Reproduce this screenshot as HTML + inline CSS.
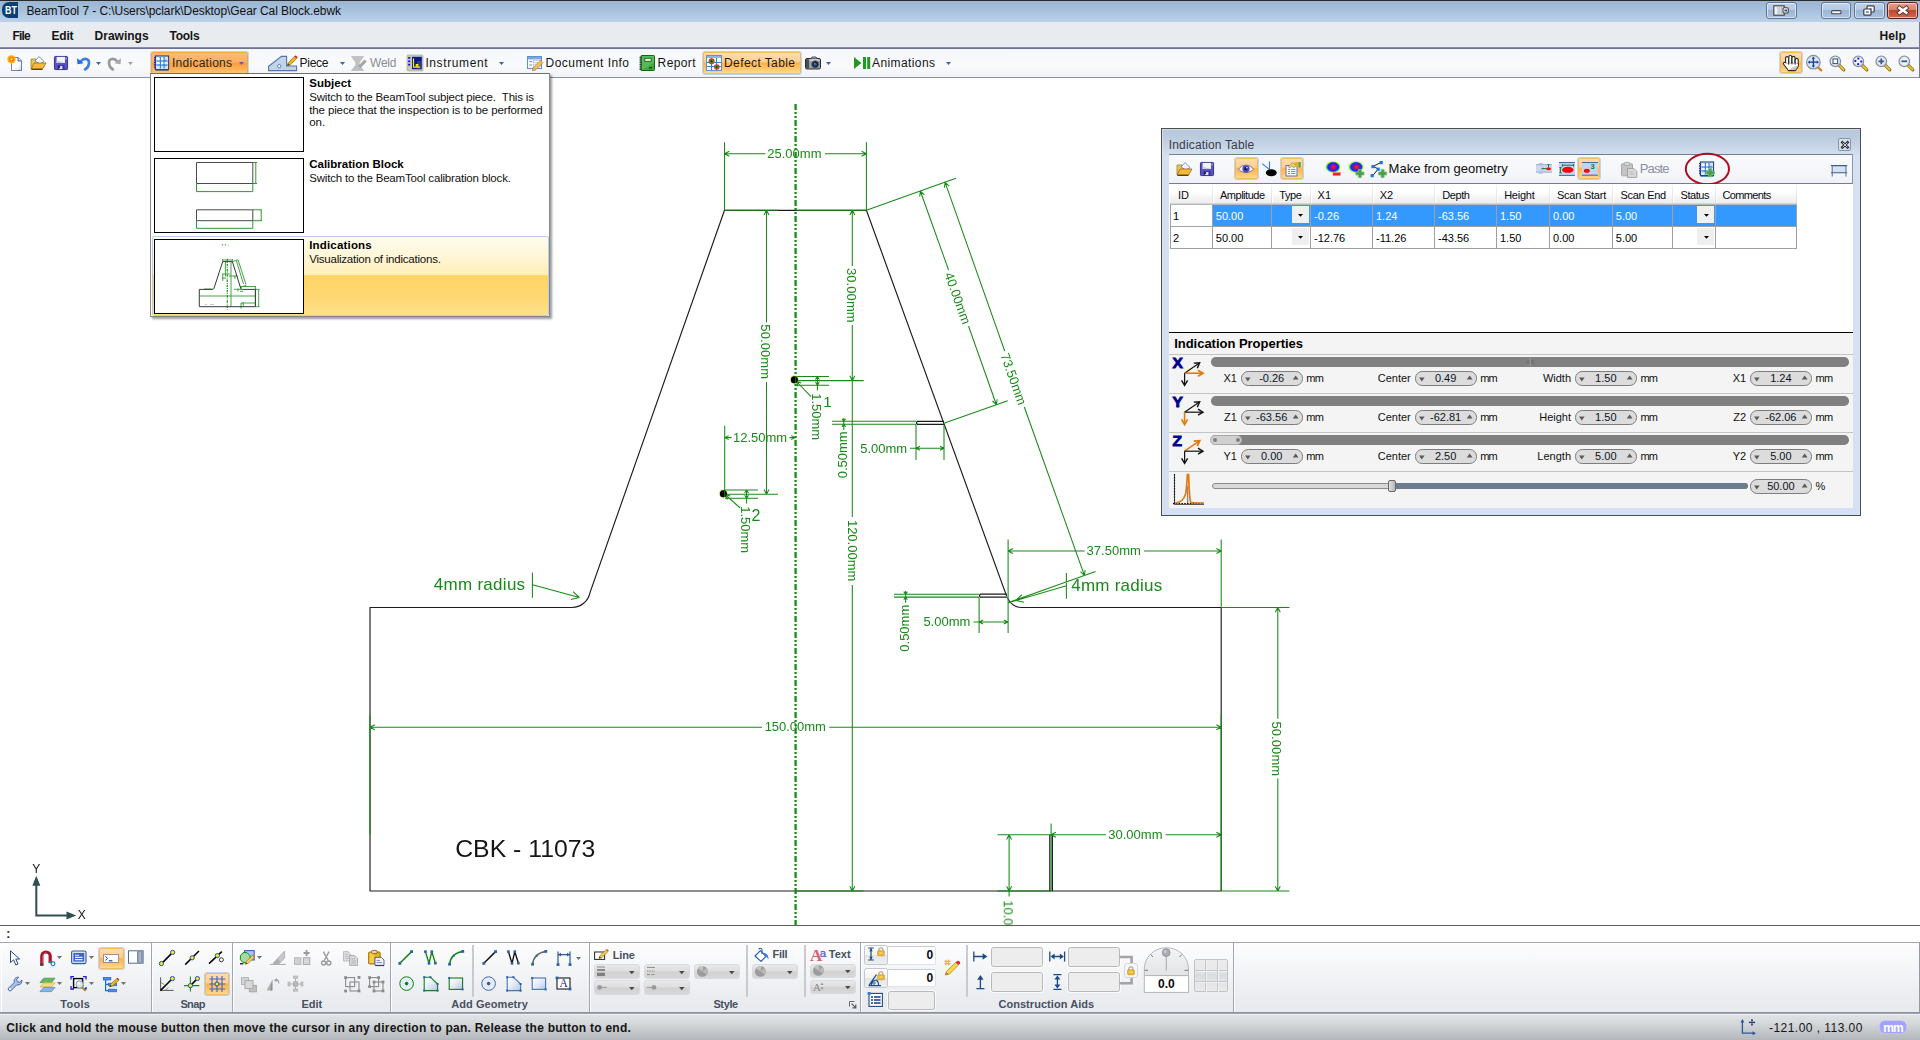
<!DOCTYPE html>
<html lang="en"><head><meta charset="utf-8"><title>BeamTool 7 - Gear Cal Block.ebwk</title>
<style>
html,body{margin:0;padding:0}
body{width:1920px;height:1040px;position:relative;overflow:hidden;background:#fff;font-family:'Liberation Sans',sans-serif;}
.t{position:absolute;white-space:nowrap;line-height:1;display:block}
.i{position:absolute;overflow:visible;display:block}
</style></head>
<body>
<!-- chrome -->
<div style="position:absolute;left:0px;top:0px;width:1920px;height:22px;background:linear-gradient(#99b5d3 0%,#a6c0dc 45%,#bbd2ea 100%);"></div>
<div style="position:absolute;left:0px;top:0px;width:1920px;height:1px;background:#2b2b2b;"></div>
<svg class="i" style="left:2px;top:2px" width="16" height="16" viewBox="0 0 16 16"><path d="M7 0H16V16H7A7 7 0 0 1 0 9V7A7 7 0 0 1 7 0Z" fill="#0d3f73"/><text x="8.9" y="12.4" font-family="Liberation Sans,sans-serif" font-weight="bold" font-size="11.4" fill="#fff" text-anchor="middle" textLength="12" lengthAdjust="spacingAndGlyphs">BT</text></svg>
<span class="t" style="left:26.40px;top:5.00px;font-size:12px;color:#101010;letter-spacing:-0.076px;">BeamTool 7 - C:\Users\pclark\Desktop\Gear Cal Block.ebwk</span>
<div style="position:absolute;left:1766px;top:2px;width:31px;height:17px;box-sizing:border-box;border:1px solid #5f7697;border-radius:3px;background:linear-gradient(#bed2e8 0%,#b4cae3 45%,#9bb6d4 50%,#a9c2de 100%);box-shadow:inset 0 0 0 1px rgba(255,255,255,.55);"></div>
<div style="position:absolute;left:1821px;top:2px;width:30px;height:17px;box-sizing:border-box;border:1px solid #5f7697;border-radius:3px;background:linear-gradient(#bed2e8 0%,#b4cae3 45%,#9bb6d4 50%,#a9c2de 100%);box-shadow:inset 0 0 0 1px rgba(255,255,255,.55);"></div>
<div style="position:absolute;left:1854px;top:2px;width:31px;height:17px;box-sizing:border-box;border:1px solid #5f7697;border-radius:3px;background:linear-gradient(#bed2e8 0%,#b4cae3 45%,#9bb6d4 50%,#a9c2de 100%);box-shadow:inset 0 0 0 1px rgba(255,255,255,.55);"></div>
<div style="position:absolute;left:1887px;top:2px;width:31px;height:17px;box-sizing:border-box;border:1px solid #5a1f1f;border-radius:3px;background:linear-gradient(#e3a193 0%,#d9806c 45%,#c2452c 50%,#cf6a52 100%);box-shadow:inset 0 0 0 1px rgba(255,255,255,.55);"></div>
<svg class="i" style="left:1773px;top:5px" width="16" height="11" viewBox="0 0 16 11"><rect x=".8" y=".8" width="10.4" height="9.4" fill="#eef2f6" stroke="#3c3c46" stroke-width="1.1"/><path d="M5 1.4V9.6M6.8 1.4V9.6M8.6 1.4V9.6" stroke="#a0a8b4" stroke-width=".8"/><rect x="10" y="2.8" width="5.2" height="5.2" rx="1" fill="#fff" stroke="#3c3c46" stroke-width="1.1"/><rect x="11.4" y="4.6" width="2.6" height="1.8" fill="#3c3c46"/></svg>
<svg class="i" style="left:1831.2px;top:10.3px" width="10.6" height="4.4" viewBox="0 0 10.6 4.4"><rect x=".6" y=".6" width="9.4" height="3.2" rx="1" fill="#f4f6f8" stroke="#4a4a52" stroke-width="1.1"/></svg>
<svg class="i" style="left:1863px;top:5px" width="12" height="11" viewBox="0 0 12 11"><rect x="4" y=".8" width="7.2" height="6.2" rx="1" fill="#fff" stroke="#3c3c46" stroke-width="1.2"/><rect x="6.3" y="2.9" width="2.8" height="1.8" fill="#8ea7c4"/><rect x=".8" y="4" width="7.2" height="6.2" rx="1" fill="#fff" stroke="#3c3c46" stroke-width="1.2"/><rect x="2.9" y="6.1" width="3" height="2" fill="#7d98b8"/></svg>
<svg class="i" style="left:1896.6px;top:5.8px" width="11.8" height="8.8" viewBox="0 0 11.8 8.8"><path d="M2.5 2L9.3 6.8M9.3 2L2.5 6.8" stroke="#5a3430" stroke-width="4.4" stroke-linecap="square"/><path d="M2.5 2L9.3 6.8M9.3 2L2.5 6.8" stroke="#fff" stroke-width="2.6" stroke-linecap="square"/></svg>
<div style="position:absolute;left:0px;top:22px;width:1920px;height:25px;background:#e8ebf0;"></div>
<span class="t" style="left:12.40px;top:30.00px;font-size:12px;color:#151515;font-weight:bold;letter-spacing:-0.757px;">File</span>
<span class="t" style="left:51.40px;top:30.00px;font-size:12px;color:#151515;font-weight:bold;letter-spacing:-0.155px;">Edit</span>
<span class="t" style="left:94.60px;top:30.00px;font-size:12px;color:#151515;font-weight:bold;">Drawings</span>
<span class="t" style="left:169.60px;top:30.00px;font-size:12px;color:#151515;font-weight:bold;letter-spacing:-0.277px;">Tools</span>
<span class="t" style="left:1879.40px;top:30.00px;font-size:12px;color:#151515;font-weight:bold;letter-spacing:0.132px;">Help</span>
<div style="position:absolute;left:0px;top:47px;width:1920px;height:1px;background:#878ba3;"></div>
<div style="position:absolute;left:0px;top:48px;width:1920px;height:1px;background:#6f7392;"></div>
<div style="position:absolute;left:0px;top:49px;width:1920px;height:28px;background:linear-gradient(#f6f7fa,#f9fafc 60%,#f1f3f7);"></div>
<div style="position:absolute;left:0px;top:77px;width:1920px;height:1px;background:#8e92a6;"></div>
<div style="position:absolute;left:1919px;top:22px;width:1px;height:56px;background:#727a94;"></div>
<!-- toolbar -->
<svg width="0" height="0" style="position:absolute"><defs><linearGradient id="gPage" x1="0" y1="0" x2="1" y2="1"><stop offset="0" stop-color="#fff"/><stop offset=".6" stop-color="#fff"/><stop offset="1" stop-color="#b8c4dc"/></linearGradient></defs></svg>
<svg class="i" style="left:7px;top:55px" width="16" height="16" viewBox="0 0 16 16"><path d="M4.5 2.5H11L14.5 6V15.5H4.5Z" fill="#fff" stroke="#2c4a78"/><path d="M4.5 2.5H11L14.5 6V15.5H4.5Z" fill="url(#gPage)" stroke="none" opacity=".7"/><path d="M11 2.5V6H14.5" fill="#cfd8e8" stroke="#2c4a78" stroke-width=".8"/><circle cx="4.5" cy="4.3" r="4.1" fill="#ffb000"/><circle cx="4.5" cy="4.3" r="2.6" fill="#ff7a00"/><circle cx="4.5" cy="4.3" r="1.1" fill="#fff2a0"/></svg>
<svg class="i" style="left:30px;top:55px" width="16" height="16" viewBox="0 0 16 16"><path d="M1 4H6L7 5.5H12V14H1Z" fill="#e6c75a" stroke="#a08030" stroke-width=".8"/><path d="M5 6L9 1.5L14 6.5L10 9Z" fill="#f4f8ff" stroke="#5a7ab0" stroke-width=".8"/><path d="M1.2 14L4 8H16L12.5 14Z" fill="#f6b93a" stroke="#9a6a10" stroke-width=".8"/><path d="M1.5 14.3H12.5" stroke="#3a2a08" stroke-width="1"/></svg>
<svg class="i" style="left:54px;top:56px" width="14" height="14" viewBox="0 0 16 16"><rect x=".5" y=".5" width="15" height="15" rx="1" fill="#5a52c8" stroke="#2a2480"/><rect x="3" y="1" width="9.5" height="7" fill="#f2f4fa"/><path d="M3 5L12.5 8H3Z" fill="#c8ccd8"/><rect x="4" y="10.5" width="8" height="5" fill="#3a3490"/><rect x="6" y="11.5" width="3.6" height="3.4" fill="#e8e8f0"/><rect x="5" y="11.5" width="2" height="2" fill="#1a1a30"/><rect x="13.2" y="2" width="1.2" height="2" fill="#c0c0f0"/></svg>
<svg class="i" style="left:76px;top:55px" width="16" height="16" viewBox="0 0 16 16"><g><path d="M4.5 6.5C8 2.5 13.5 3 13 8.5C12.6 11.6 11 13.5 9 14.5" fill="none" stroke="#3f7fe0" stroke-width="2.6" stroke-linecap="round"/><path d="M1 3.2L1.5 9.2L7.6 8.2Z" fill="#2468d8"/></g></svg>
<svg class="i" style="left:95.7px;top:62px" width="5" height="3" viewBox="0 0 5 3"><path d="M0 0H5L2.5 3Z" fill="#4a5aa0"/></svg>
<svg class="i" style="left:106px;top:55px" width="16" height="16" viewBox="0 0 16 16"><g transform="translate(16,0) scale(-1,1)"><path d="M4.5 6.5C8 2.5 13.5 3 13 8.5C12.6 11.6 11 13.5 9 14.5" fill="none" stroke="#9a9a9a" stroke-width="2.6" stroke-linecap="round"/><path d="M1 3.2L1.5 9.2L7.6 8.2Z" fill="#a8a8a8"/></g></svg>
<svg class="i" style="left:128px;top:62px" width="5" height="3" viewBox="0 0 5 3"><path d="M0 0H5L2.5 3Z" fill="#a0a0a0"/></svg>
<div style="position:absolute;left:151px;top:52px;width:96.5px;height:21.5px;box-sizing:border-box;border:1px solid #f3a848;border-radius:2px;background:linear-gradient(#ffba78 0%,#ffae60 45%,#ff9c3a 52%,#ffb25a 80%,#ffc272 100%);box-shadow:0 0 0 1px #9cc0ee99;"></div>
<svg class="i" style="left:152.6px;top:54.6px" width="16" height="16" viewBox="0 0 16 16"><rect x="2.5" y="1" width="13" height="13.5" fill="#f4f8ff" stroke="#274a86" stroke-width="1.2"/><rect x="3.6" y="2.2" width="10.8" height="11" fill="#cfe0f6"/><path d="M3.5 6H14.5M3.5 10H14.5M7.3 2V13.5M11 2V13.5" stroke="#2f80d8" stroke-width="1.3"/><rect x="4.2" y="3" width="2.4" height="2.3" fill="#fff"/><rect x="8" y="3" width="2.3" height="2.3" fill="#fff"/><rect x="4.2" y="6.8" width="2.4" height="2.4" fill="#fff"/><rect x="8" y="6.8" width="2.3" height="2.4" fill="#fff"/><rect x="11.7" y="6.8" width="2.3" height="2.4" fill="#e8eefa"/><rect x="4.2" y="10.8" width="2.4" height="2.2" fill="#e0e6f2"/><rect x="8" y="10.8" width="2.3" height="2.2" fill="#d8deee"/><path d="M2.5 15H15.5" stroke="#274a86" stroke-width="1.2"/><path d="M1 2.5H3M1 4.2H3M1 5.9H3M1 7.6H3M1 9.3H3M1 11H3M1 12.7H3" stroke="#1a30a8" stroke-width="1"/></svg>
<span class="t" style="left:172.00px;top:57.00px;font-size:12px;color:#1c2a20;letter-spacing:0.263px;">Indications</span>
<svg class="i" style="left:239px;top:62px" width="5" height="3" viewBox="0 0 5 3"><path d="M0 0H5L2.5 3Z" fill="#5a62a8"/></svg>
<svg class="i" style="left:268px;top:54.6px" width="30" height="16" viewBox="0 0 30 16"><path d="M.6 15.6V11.2L13.4 1.4H18.6V11H28.6V15.6Z" fill="#c3d3ea" stroke="#4e76ad" stroke-width="1.1"/><circle cx="11.2" cy="11.2" r="1.7" fill="#fff" stroke="#4e76ad" stroke-width=".9"/><path d="M19.4 10.6L20.2 8L26.4 1.4L28.6 3.4L22.2 10Z" fill="#e8b820" stroke="#7a5a10" stroke-width=".6"/><path d="M26.4 1.4L27.6 .2L29.6 2.2L28.6 3.4Z" fill="#e02020"/><path d="M19.4 10.6L20 8.6L21.6 10Z" fill="#3a2a10"/></svg>
<span class="t" style="left:299.50px;top:57.00px;font-size:12px;color:#151515;letter-spacing:-0.254px;">Piece</span>
<svg class="i" style="left:340px;top:62px" width="5" height="3" viewBox="0 0 5 3"><path d="M0 0H5L2.5 3Z" fill="#4a5aa0"/></svg>
<svg class="i" style="left:351px;top:55px" width="16" height="16" viewBox="0 0 16 16"><path d="M.5 1.5H12.5L8.2 7.5V10L12.5 15.5H.5L4.8 10V7.5Z" fill="#c2c2c2" stroke="#b0b0b0" stroke-width=".6"/><path d="M7 13L7.6 11L13.5 5L15.3 6.6L9.2 12.8Z" fill="#a8a8a8" stroke="#8a8a8a" stroke-width=".6"/><path d="M7 13L7.5 11.4L8.8 12.7Z" fill="#e8e8e8"/></svg>
<span class="t" style="left:370.00px;top:57.00px;font-size:12px;color:#8c8c94;letter-spacing:-0.208px;">Weld</span>
<svg class="i" style="left:407px;top:55px" width="16" height="16" viewBox="0 0 16 16"><rect x="0" y="0" width="16" height="16" rx="1" fill="#c9c8bf" stroke="#a4a39a" stroke-width=".6"/><rect x="5" y="1.8" width="9.8" height="12.4" fill="#0c1a80"/><rect x="10" y="6" width="4.8" height="8.2" fill="#3a4a98" opacity=".7"/><path d="M6.5 3.5V12.2H13M9.3 12V9.5H10.8V12" fill="none" stroke="#fff000" stroke-width="1.2"/><rect x="1.2" y="2" width="2" height="1.8" fill="#1010f0"/><rect x="1.2" y="5.4" width="2" height="1.8" fill="#1010f0"/><rect x="1.2" y="8.8" width="2" height="1.8" fill="#1010f0"/></svg>
<span class="t" style="left:425.40px;top:57.00px;font-size:12px;color:#151515;letter-spacing:0.612px;">Instrument</span>
<svg class="i" style="left:499px;top:62px" width="5" height="3" viewBox="0 0 5 3"><path d="M0 0H5L2.5 3Z" fill="#4a5aa0"/></svg>
<svg class="i" style="left:527px;top:55px" width="16" height="16" viewBox="0 0 16 16"><rect x=".5" y="1.5" width="14" height="12" fill="#f4f7fc" stroke="#5f8fd0"/><rect x="1" y="2" width="13" height="2.4" fill="#7aa6e0"/><path d="M2.5 6.5H5M2.5 10H5" stroke="#5f8fd0" stroke-width="1.2"/><rect x="6.5" y="5.5" width="7" height="2.2" fill="#fff" stroke="#b0b8c8" stroke-width=".6"/><rect x="6.5" y="9.2" width="7" height="2.2" fill="#fff" stroke="#b0b8c8" stroke-width=".6"/><path d="M5.5 15.5L6.3 12.4L13.5 5.2L16 7.6L8.8 14.8Z" fill="#f0c050" stroke="#b07820" stroke-width=".6"/><path d="M5.5 15.5L6.3 12.6L8.6 14.8Z" fill="#f6e0c0" stroke="#8a5a20" stroke-width=".5"/></svg>
<span class="t" style="left:545.60px;top:57.00px;font-size:12px;color:#151515;letter-spacing:0.447px;">Document Info</span>
<svg class="i" style="left:639px;top:55px" width="16" height="16" viewBox="0 0 16 16"><rect x="2" y=".5" width="13.5" height="15" rx=".8" fill="#3fa83f" stroke="#0f6a0f"/><path d="M3 1H15V8L3 15Z" fill="#6cc86c" opacity=".55"/><rect x="5.8" y="3.3" width="6.4" height="3" fill="#e8f8e8" stroke="#0f5a0f" stroke-width=".8"/><path d="M10 12.8H13" stroke="#083808" stroke-width="1.3"/><path d="M.5 2.2H2.6M.5 4H2.6M.5 5.8H2.6M.5 7.6H2.6M.5 9.4H2.6M.5 11.2H2.6M.5 13H2.6M.5 14.6H2.6" stroke="#222" stroke-width=".9"/></svg>
<span class="t" style="left:657.60px;top:57.00px;font-size:12px;color:#151515;letter-spacing:0.396px;">Report</span>
<div style="position:absolute;left:703.2px;top:52px;width:98.3px;height:21.5px;box-sizing:border-box;border:1px solid #f1bc60;border-radius:2px;background:linear-gradient(#ffdcae 0%,#ffcf90 42%,#ffb44a 52%,#ffc468 76%,#ffdb8a 100%);box-shadow:0 0 0 1px #9fbdea99;"></div>
<svg class="i" style="left:706px;top:55.2px" width="16" height="16" viewBox="0 0 16 16"><rect x=".5" y=".5" width="15" height="15" fill="#fff" stroke="#5f8fd0"/><rect x="1" y="1" width="14" height="2" fill="#8fb4e8"/><path d="M1 7.5H15M1 11.5H15M5.5 3V15M10.5 3V15" stroke="#2f7fe0" stroke-width="1.1"/><circle cx="5.6" cy="6.3" r="3" fill="#f02a1a"/><circle cx="5.6" cy="6.3" r="1.9" fill="#18b018"/><circle cx="5.6" cy="6.3" r=".9" fill="#101010"/><circle cx="10.8" cy="12" r="2.8" fill="#f02a1a"/><circle cx="10.8" cy="12" r="1.8" fill="#18b018"/><circle cx="10.8" cy="12" r=".8" fill="#101010"/></svg>
<span class="t" style="left:724.00px;top:57.00px;font-size:12px;color:#1c1c1c;letter-spacing:0.410px;">Defect Table</span>
<svg class="i" style="left:805.3px;top:56.2px" width="16" height="14" viewBox="0 0 16 14"><rect x=".5" y="2.5" width="15" height="10.5" rx="1.5" fill="#9aa0aa" stroke="#2a2a2a"/><rect x="1" y="3" width="3" height="9.5" rx="1" fill="#4a4e58"/><path d="M6 2.5L7 1H11L12 2.5" fill="#b8bcc4" stroke="#2a2a2a" stroke-width=".8"/><rect x="4.5" y="3.2" width="10" height="1.6" fill="#d0d4dc"/><circle cx="10.2" cy="8.3" r="3.6" fill="#20242c" stroke="#6a6e78" stroke-width=".8"/><circle cx="10.2" cy="8.3" r="1.5" fill="#1a5ad8"/><circle cx="9.7" cy="7.8" r=".5" fill="#9cc0ff"/></svg>
<svg class="i" style="left:826px;top:62px" width="5" height="3" viewBox="0 0 5 3"><path d="M0 0H5L2.5 3Z" fill="#4a5aa0"/></svg>
<svg class="i" style="left:854px;top:57px" width="16.2" height="12" viewBox="0 0 16.2 12"><path d="M0 0L7.4 6L0 12Z" fill="#1e9a1e"/><rect x="9" y="0" width="3" height="12" fill="#1e9a1e"/><rect x="13.2" y="0" width="3" height="12" fill="#1e9a1e"/></svg>
<span class="t" style="left:872.00px;top:57.00px;font-size:12px;color:#151515;letter-spacing:0.404px;">Animations</span>
<svg class="i" style="left:946px;top:62px" width="5" height="3" viewBox="0 0 5 3"><path d="M0 0H5L2.5 3Z" fill="#4a5aa0"/></svg>
<div style="position:absolute;left:1779.5px;top:52.4px;width:22px;height:21px;box-sizing:border-box;border:1px solid #f1bc60;border-radius:2px;background:linear-gradient(#ffdcae 0%,#ffcf90 42%,#ffb44a 52%,#ffc468 76%,#ffdb8a 100%);box-shadow:0 0 0 1px #9fbdea99;"></div>
<svg class="i" style="left:1783px;top:55px" width="16" height="16" viewBox="0 0 16 16"><g stroke="#2a2a2a" stroke-width="1.1" fill="#fff" stroke-linejoin="round"><rect x="2.6" y="1.6" width="3" height="9" rx="1.5"/><rect x="5.8" y=".5" width="3" height="10" rx="1.5"/><rect x="9" y="1.4" width="3" height="9" rx="1.5"/><rect x="12.2" y="3.4" width="3" height="8" rx="1.5"/><path d="M3 8.6H15.2V10.4C15.2 12.6 13 14 12.4 15.6H5.4C4.4 13.4 1.6 11 .6 9C0 7.6 1.6 6.8 2.6 7.8Z"/></g><path d="M3.1 8.2H14.7V10.4C14.7 12.4 12.6 13.8 12 15.1H5.8C4.8 13 2.4 11 1.2 8.8C1 8 2 7.6 2.6 8.4Z" fill="#fff"/><path d="M5.8 15.1L12 15.1C12.6 13.8 14.7 12.4 14.7 10.4L9 12.6Z" fill="#b4b4b4" opacity=".75"/><path d="M5.7 7V9.6M8.9 7V9.4M12.1 7.4V9.6" stroke="#2a2a2a" stroke-width="1"/></svg>
<svg class="i" style="left:1806.2px;top:55px" width="16" height="16" viewBox="0 0 16 16"><path d="M11 11.4L15.2 15.4" stroke="#d88018" stroke-width="2.2" stroke-linecap="round"/><circle cx="7.4" cy="7.2" r="6.8" fill="#d4e4f8" stroke="#8a9098" stroke-width="1.2"/><g transform="translate(.9 .4)"><path d="M6.5 2.2V11.4M1.9 6.8H11.1" stroke="#1c3c88" stroke-width="1.3"/><path d="M6.5 1.2L4.9 3.4H8.1ZM6.5 12.4L4.9 10.2H8.1ZM.9 6.8L3.1 5.2V8.4ZM12.1 6.8L9.9 5.2V8.4Z" fill="#1c3c88"/></g></svg>
<svg class="i" style="left:1829px;top:55px" width="16" height="16" viewBox="0 0 16 16"><path d="M9.5 9.5L14.8 14.8" stroke="#8a6a10" stroke-width="3.2" stroke-linecap="round"/><path d="M9.8 9.8L14.6 14.6" stroke="#e8c840" stroke-width="1.8" stroke-linecap="round"/><circle cx="6.3" cy="6.3" r="5.2" fill="#eef3fa" stroke="#8a9098" stroke-width="1.4"/><circle cx="6.3" cy="6.3" r="4.2" fill="none" stroke="#d4dae4" stroke-width=".8"/><rect x="4" y="4" width="4.6" height="4.6" fill="#fff" stroke="#3a5a90" stroke-width="1.1"/></svg>
<svg class="i" style="left:1852px;top:55px" width="16" height="16" viewBox="0 0 16 16"><path d="M9.5 9.5L14.8 14.8" stroke="#8a6a10" stroke-width="3.2" stroke-linecap="round"/><path d="M9.8 9.8L14.6 14.6" stroke="#e8c840" stroke-width="1.8" stroke-linecap="round"/><circle cx="6.3" cy="6.3" r="5.2" fill="#eef3fa" stroke="#8a9098" stroke-width="1.4"/><circle cx="6.3" cy="6.3" r="4.2" fill="none" stroke="#d4dae4" stroke-width=".8"/><rect x="5.4" y="2.6" width="1.9" height="1.9" fill="#1010f0"/><rect x="2.4" y="5" width="1.9" height="1.9" fill="#1010f0"/><rect x="8.3" y="5.6" width="1.9" height="1.9" fill="#1010f0"/><rect x="5.2" y="8.2" width="1.9" height="1.9" fill="#1010f0"/></svg>
<svg class="i" style="left:1875px;top:55px" width="16" height="16" viewBox="0 0 16 16"><path d="M9.5 9.5L14.8 14.8" stroke="#8a6a10" stroke-width="3.2" stroke-linecap="round"/><path d="M9.8 9.8L14.6 14.6" stroke="#e8c840" stroke-width="1.8" stroke-linecap="round"/><circle cx="6.3" cy="6.3" r="5.2" fill="#eef3fa" stroke="#8a9098" stroke-width="1.4"/><circle cx="6.3" cy="6.3" r="4.2" fill="none" stroke="#d4dae4" stroke-width=".8"/><path d="M6.3 3.4V9.2M3.4 6.3H9.2" stroke="#3a5a90" stroke-width="1.8"/></svg>
<svg class="i" style="left:1898px;top:55px" width="16" height="16" viewBox="0 0 16 16"><path d="M9.5 9.5L14.8 14.8" stroke="#8a6a10" stroke-width="3.2" stroke-linecap="round"/><path d="M9.8 9.8L14.6 14.6" stroke="#e8c840" stroke-width="1.8" stroke-linecap="round"/><circle cx="6.3" cy="6.3" r="5.2" fill="#eef3fa" stroke="#8a9098" stroke-width="1.4"/><circle cx="6.3" cy="6.3" r="4.2" fill="none" stroke="#d4dae4" stroke-width=".8"/><path d="M3.4 6.3H9.2" stroke="#3a5a90" stroke-width="1.8"/></svg>
<!-- drawing -->
<svg class="i" style="left:0;top:78px;will-change:transform" width="1920" height="847" viewBox="0 78 1920 847" font-family="Liberation Sans, sans-serif">
<path d="M724.5 210.3H866.4L1006.6 596M1007.4 597.6A15.5 15.5 0 0 0 1022.5 607.5H1221.2V891H370V607.5H572A18.4 18.4 0 0 0 590 592.6L724.5 210.3" fill="none" stroke="#1c1c1c" stroke-width="1.15" stroke-linejoin="round"/>
<path d="M944 421.3H917.5Q915.5 422.8 917.5 424.3H944.8M1006.6 594.1H980.5Q978.5 595.6 980.5 597.2H1007.4M1049.8 891V834.7M1052.4 891V834.7" fill="none" stroke="#1c1c1c" stroke-width="1.2"/>
<path d="M795.6 104V925" stroke="#178a17" stroke-width="2.3" stroke-dasharray="6 2 2 2 2 2" fill="none"/>
<path d="M724.5 142.3L724.5 210.3M866.4 142.3L866.4 210.3M724.5 153.8L765.3 153.8M825.0 153.8L866.4 153.8M724.5 153.8L729.3 156.3M724.5 153.8L729.3 151.3M866.4 153.8L861.6 151.3M866.4 153.8L861.6 156.3M724.5 210.3L778.0 210.3M795.6 210.3L866.4 210.3M866.4 210.3L955.9 178.2M944.6 423.0L1007.7 400.8M920.4 191.2L948.6 270.1M968.5 326.0L996.4 404.7M920.4 191.2L919.7 196.6M920.4 191.2L924.3 194.9M996.4 404.7L997.1 399.3M996.4 404.7L992.5 401.0M945.1 182.4L1004.7 351.0M1024.3 407.0L1084.4 575.4M945.1 182.4L944.4 187.8M945.1 182.4L949.0 186.1M1084.4 575.4L1085.1 570.0M1084.4 575.4L1080.5 571.7M1008.5 602.5L1095.6 571.5M766.5 210.3L766.5 322.6M766.5 382.0L766.5 494.2M766.5 210.3L764.0 215.1M766.5 210.3L769.0 215.1M766.5 494.2L769.0 489.4M766.5 494.2L764.0 489.4M725.0 494.2L778.0 494.2M852.3 210.3L852.3 266.0M852.3 325.0L852.3 380.6M852.3 210.3L849.8 215.1M852.3 210.3L854.8 215.1M852.3 380.6L854.8 375.8M852.3 380.6L849.8 375.8M796.0 380.6L863.7 380.6M852.3 380.6L852.3 517.0M852.3 585.0L852.3 891.0M852.3 891.0L854.8 886.2M852.3 891.0L849.8 886.2M796.0 891.0L863.5 891.0M796.0 376.4L829.0 376.4M796.0 385.2L829.0 385.2M817.4 376.4L817.4 390.5M817.4 376.4L815.5 379.5M817.4 376.4L819.3 379.5M817.4 385.2L819.3 382.1M817.4 385.2L815.5 382.1M796.5 381.5L811.0 396.6M796.5 381.5L798.0 386.3M796.5 381.5L801.2 383.1M725.0 490.0L758.0 490.0M725.0 498.3L758.0 498.3M746.6 490.0L746.6 503.4M746.6 490.0L744.7 493.1M746.6 490.0L748.5 493.1M746.6 498.3L748.5 495.2M746.6 498.3L744.7 495.2M725.5 494.8L740.2 508.0M725.5 494.8L727.3 499.5M725.5 494.8L730.3 496.1M724.7 425.7L724.7 493.0M724.7 437.6L731.5 437.6M789.5 437.6L795.6 437.6M724.7 437.6L728.7 439.6M724.7 437.6L728.7 435.6M795.2 437.6L791.2 435.6M795.2 437.6L791.2 439.6M832.0 421.3L916.5 421.3M832.0 424.3L916.5 424.3M843.8 418.0L843.8 430.0M843.8 421.3L845.6 418.7M843.8 421.3L842.0 418.7M843.8 424.3L842.0 426.9M843.8 424.3L845.6 426.9M916.0 424.3L916.0 460.0M944.0 424.3L944.0 460.0M910.0 448.3L944.0 448.3M916.0 448.3L920.0 450.3M916.0 448.3L920.0 446.3M944.0 448.3L940.0 446.3M944.0 448.3L940.0 450.3M894.0 594.2L979.0 594.2M894.0 597.1L979.0 597.1M905.6 591.0L905.6 602.8M905.6 594.2L907.4 591.6M905.6 594.2L903.8 591.6M905.6 597.1L903.8 599.7M905.6 597.1L907.4 599.7M979.1 597.5L979.1 633.0M973.5 622.0L1008.0 622.0M979.1 622.0L983.1 624.0M979.1 622.0L983.1 620.0M1007.8 622.0L1003.8 620.0M1007.8 622.0L1003.8 624.0M1008.1 539.6L1008.1 633.0M1221.2 539.4L1221.2 607.5M1008.1 551.0L1084.6 551.0M1144.0 551.0L1221.2 551.0M1008.1 551.0L1012.9 553.5M1008.1 551.0L1012.9 548.5M1221.2 551.0L1216.4 548.5M1221.2 551.0L1216.4 553.5M532.4 572.4L532.4 597.8M532.4 584.7L579.3 597.5M579.3 597.5L573.1 591.7M579.3 597.5L571.0 599.4M1066.4 573.1L1066.4 598.8M1066.4 585.8L1010.0 602.3M1015.8 600.5L1024.1 602.2M1015.8 600.5L1021.9 594.6M370.0 727.2L762.0 727.2M829.3 727.2L1221.2 727.2M370.0 727.2L374.8 729.7M370.0 727.2L374.8 724.7M1221.2 727.2L1216.4 724.7M1221.2 727.2L1216.4 729.7M370.0 715.3L370.0 834.3M1221.2 715.0L1221.2 891.0M1221.2 607.5L1289.4 607.5M1221.2 891.0L1289.4 891.0M1277.8 607.5L1277.8 718.8M1277.8 778.4L1277.8 891.0M1277.8 607.5L1275.3 612.3M1277.8 607.5L1280.3 612.3M1277.8 891.0L1280.3 886.2M1277.8 891.0L1275.3 886.2M1051.1 823.4L1051.1 891.0M1051.1 834.7L1106.0 834.7M1165.7 834.7L1221.2 834.7M1051.1 834.7L1055.9 837.2M1051.1 834.7L1055.9 832.2M1221.2 834.7L1216.4 832.2M1221.2 834.7L1216.4 837.2M997.5 834.7L1051.1 834.7M997.5 891.0L1051.1 891.0M1009.1 834.7L1009.1 896.6M1009.1 834.7L1006.6 839.5M1009.1 834.7L1011.6 839.5M1009.1 891.0L1011.6 886.2M1009.1 891.0L1006.6 886.2" fill="none" stroke="#178a17" stroke-width="1.05"/>
<text x="767.3" y="157.6" font-size="13" fill="#178a17">25.00mm</text>
<text transform="translate(944.3 274.2) rotate(70.35)" font-size="13" fill="#178a17">40.00mm</text>
<text transform="translate(1000.2 355.0) rotate(70.35)" font-size="13" fill="#178a17">73.50mm</text>
<text transform="translate(761.0 324.3) rotate(90)" font-size="13" fill="#178a17" letter-spacing="0.1">50.00mm</text>
<text transform="translate(846.9 267.9) rotate(90)" font-size="13" fill="#178a17" letter-spacing="0.1">30.00mm</text>
<text transform="translate(847.6 519.9) rotate(90)" font-size="13" fill="#178a17">120.00mm</text>
<text transform="translate(811.6 393.2) rotate(90)" font-size="13" fill="#178a17">1.50mm</text>
<text x="823.3" y="407.0" font-size="15.2" fill="#178a17">1</text>
<text transform="translate(740.6 506.2) rotate(90)" font-size="13" fill="#178a17">1.50mm</text>
<text x="751.5" y="520.6" font-size="16" fill="#178a17">2</text>
<text x="733.1" y="441.9" font-size="13" fill="#178a17" letter-spacing="-0.03">12.50mm</text>
<text transform="translate(846.8 478.3) rotate(-90)" font-size="13" fill="#178a17">0.50mm</text>
<text x="860.2" y="452.7" font-size="13" fill="#178a17">5.00mm</text>
<text transform="translate(909.3 651.7) rotate(-90)" font-size="13" fill="#178a17">0.50mm</text>
<text x="923.4" y="626.4" font-size="13" fill="#178a17">5.00mm</text>
<text x="1086.6" y="554.9" font-size="13" fill="#178a17">37.50mm</text>
<text x="433.8" y="590.4" font-size="17" fill="#178a17" letter-spacing="0.28">4mm radius</text>
<text x="1071.2" y="591.0" font-size="17" fill="#178a17" letter-spacing="0.25">4mm radius</text>
<text x="764.7" y="731.1" font-size="13" fill="#178a17" letter-spacing="-0.05">150.00mm</text>
<text transform="translate(1272.4 721.4) rotate(90)" font-size="13" fill="#178a17" letter-spacing="0.1">50.00mm</text>
<text x="1108.3" y="838.5" font-size="13" fill="#178a17">30.00mm</text>
<text transform="translate(1003.7 900.3) rotate(90)" font-size="13" fill="#178a17">10.00mm</text>
<circle cx="794.4" cy="379.7" r="4.1" fill="#b8c020" opacity=".8"/><circle cx="794.4" cy="379.7" r="3.5" fill="#000"/>
<path d="M795.6 376.5V383.09999999999997" stroke="#0a6a0a" stroke-width="1.2"/>
<circle cx="723.4" cy="493.7" r="4.1" fill="#b8c020" opacity=".8"/><circle cx="723.4" cy="493.7" r="3.5" fill="#000"/>
<path d="M724.6 490.5V497.09999999999997" stroke="#0a6a0a" stroke-width="1.2"/>
<text x="455.2" y="856.6" font-size="24.8" fill="#161616">CBK - 11073</text>
<g fill="#2f4f4f" stroke="none"><path d="M35.3 884V916.5H68V914.5H37.3V884Z"/><path d="M36.3 875.8L32.3 885.8H40.3Z"/><path d="M76.2 915.5L66.5 911.6V919.4Z"/></g>
<text x="32.3" y="873.2" font-size="12" fill="#111">Y</text><text x="77.8" y="919.4" font-size="12" fill="#111">X</text>
</svg>
<!-- dropdown -->
<div style="position:absolute;left:153px;top:76px;width:398px;height:242px;background:rgba(0,0,0,.35);box-shadow:0 0 2px 1px rgba(0,0,0,.4);"></div>
<div style="position:absolute;left:150px;top:73px;width:400px;height:244px;box-sizing:border-box;background:#fff;border:1px solid #868686;border-top-color:#6e6e6e;"></div>
<div style="position:absolute;left:151.5px;top:236px;width:397px;height:80.4px;box-sizing:border-box;border:1px solid #b7cdee;border-radius:2px;background:linear-gradient(#fffcef 0%,#fff6d6 25%,#ffefb8 48.5%,#ffd465 49.5%,#ffd772 75%,#ffe08c 100%);"></div>
<div style="position:absolute;left:154px;top:77px;width:150px;height:74.6px;box-sizing:border-box;border:1px solid #000;background:#fff;"></div>
<div style="position:absolute;left:154px;top:158px;width:150px;height:74.6px;box-sizing:border-box;border:1px solid #000;background:#fff;"></div>
<div style="position:absolute;left:154px;top:239px;width:150px;height:74.6px;box-sizing:border-box;border:1px solid #000;background:#fff;"></div>
<svg class="i" style="left:154px;top:158px" width="150" height="75" viewBox="154 158 150 75"><path d="M196.5 183.5V191.6H252.8V183.5M255.8 162.5V183.5M252.8 162.5H257M252.8 183.5H257M196.5 220.7V228.3H252.8V220.7M252.8 209.8H262M252.8 220.7H262M261.2 209.8V220.7" fill="none" stroke="#2f9a2f" stroke-width="1"/><path d="M196.5 162.5H252.8V183.5H196.5ZM196.5 209.8H252.8V220.7H196.5Z" fill="none" stroke="#4a4a4a" stroke-width="1"/></svg>
<svg class="i" style="left:154px;top:239px" width="150" height="75" viewBox="154 239 150 75"><g fill="none" stroke="#2f9a2f" stroke-width=".9"><path d="M227.3 258.7V309.6" stroke-width="1.3" stroke-dasharray="2.4 1 .8 1"/><path d="M222.7 259V261.6M232.4 259V261.6M222.7 260H232.4M232.4 261.6L238 259.8M236.3 260.5L243.5 284M238 259.8L246 284.5M240.5 287.3L246 285.3M225.4 261.6V276.5M231 261.6V306.7M221.8 274H230M221.8 278H226M222.8 274V281M229 276H237.5M235 275.5V279M199.3 296H255.4M241 286V289.4M241 286.5H255.4M255.4 286V306.7M255.4 289.4H259.5M255.4 306.7H259.5M258.7 289.4V306.7M234 289.3H241M238 288.5V291.5M240 291.3H243M243.2 303H255.4M243.2 302V306.7M241 303V308.5M241 303H243.2M204 289H212.5"/><path d="M222 244.2L223 245.4M225 244.2L226 245.4M228.3 245.5V246" stroke-width="1.1" opacity=".8"/></g><path d="M222.7 261.6H232.4L240.8 288.6Q241.3 289.4 242.3 289.4H255.4V306.7H199.3V289.4H212.6Q213.5 289.4 213.9 288.6Z" fill="none" stroke="#3a3a3a" stroke-width="1"/><path d="M205 304.5H207M210 304.5H214" stroke="#aaa" stroke-width=".7"/></svg>
<span class="t" style="left:309.20px;top:78.00px;font-size:11.5px;color:#000;font-weight:bold;letter-spacing:0.044px;">Subject</span>
<span class="t" style="left:309.20px;top:92.00px;font-size:11.5px;color:#111;letter-spacing:-0.191px;">Switch to the BeamTool subject piece. &nbsp;This is</span>
<span class="t" style="left:309.20px;top:105.00px;font-size:11.5px;color:#111;letter-spacing:-0.119px;">the piece that the inspection is to be performed</span>
<span class="t" style="left:309.20px;top:117.00px;font-size:11.5px;color:#111;">on.</span>
<span class="t" style="left:309.20px;top:159.00px;font-size:11.5px;color:#000;font-weight:bold;">Calibration Block</span>
<span class="t" style="left:309.20px;top:173.00px;font-size:11.5px;color:#111;letter-spacing:-0.183px;">Switch to the BeamTool calibration block.</span>
<span class="t" style="left:309.20px;top:240.00px;font-size:11.5px;color:#000;font-weight:bold;letter-spacing:0.180px;">Indications</span>
<span class="t" style="left:309.20px;top:254.00px;font-size:11.5px;color:#111;letter-spacing:-0.220px;">Visualization of indications.</span>
<!-- panel -->
<div style="position:absolute;left:1161px;top:128px;width:700px;height:388px;box-sizing:border-box;border:1px solid #4e4e4e;background:#d5e1f2;"></div>
<div style="position:absolute;left:1162px;top:129px;width:698px;height:25.5px;background:linear-gradient(#b6c7da 0%,#bccde0 35%,#d3dfee 100%);box-shadow:inset 1px 1px 0 rgba(255,255,255,.35);"></div>
<span class="t" style="left:1168.80px;top:139.00px;font-size:12px;color:#3a3a46;letter-spacing:0.148px;">Indication Table</span>
<div style="position:absolute;left:1838.3px;top:138.4px;width:12.4px;height:12.3px;box-sizing:border-box;border:1px solid #8495ad;border-radius:2px;background:#d6e1ef;"></div>
<svg class="i" style="left:1840.6px;top:141px" width="8" height="8" viewBox="0 0 8 8"><path d="M1.4 1.4L6.6 6.4M6.6 1.4L1.4 6.4" stroke="#2a2a2a" stroke-width="2.6" stroke-linecap="square"/><path d="M1.6 1.6L6.4 6.2M6.4 1.6L1.6 6.2" stroke="#f4f4f4" stroke-width=".9"/></svg>
<div style="position:absolute;left:1169px;top:154px;width:684px;height:30px;box-sizing:border-box;background:linear-gradient(#f8f9fb,#f5f6fa 70%,#eff1f6);border-top:1px solid #6f8199;border-bottom:1px solid #777a93;border-right:1px solid #8f97ad;box-shadow:0 1px 0 #b4b6c6;"></div>
<svg class="i" style="left:1175.8px;top:161px" width="16" height="15" viewBox="0 0 16 15"><path d="M1 4H6L7 5.5H12V14H1Z" fill="#e6c75a" stroke="#a08030" stroke-width=".8"/><path d="M5 6L9 1.5L14 6.5L10 9Z" fill="#f4f8ff" stroke="#5a7ab0" stroke-width=".8"/><path d="M1.2 14L4 8H16L12.5 14Z" fill="#f6b93a" stroke="#9a6a10" stroke-width=".8"/><path d="M1.5 14.3H12.5" stroke="#3a2a08" stroke-width="1"/></svg>
<svg class="i" style="left:1200px;top:162px" width="14" height="14" viewBox="0 0 16 16"><rect x=".5" y=".5" width="15" height="15" rx="1" fill="#5a52c8" stroke="#2a2480"/><rect x="3" y="1" width="9.5" height="7" fill="#f2f4fa"/><path d="M3 5L12.5 8H3Z" fill="#c8ccd8"/><rect x="4" y="10.5" width="8" height="5" fill="#3a3490"/><rect x="6" y="11.5" width="3.6" height="3.4" fill="#e8e8f0"/><rect x="5" y="11.5" width="2" height="2" fill="#1a1a30"/><rect x="13.2" y="2" width="1.2" height="2" fill="#c0c0f0"/></svg>
<div style="position:absolute;left:1235.4px;top:158.3px;width:22.2px;height:21px;box-sizing:border-box;border:1px solid #f1bc60;border-radius:2px;background:linear-gradient(#ffdcae 0%,#ffcf90 42%,#ffb44a 52%,#ffc468 76%,#ffdb8a 100%);box-shadow:0 0 0 1px #9fbdea99;"></div>
<svg class="i" style="left:1238px;top:163px" width="16" height="12" viewBox="0 0 16 12"><path d="M.5 6.2C4 .8 12 .8 15.5 6.2C12 10.6 4 10.6 .5 6.2Z" fill="#f2f2fa" stroke="#5a5a9a" stroke-width=".8"/><circle cx="8" cy="5.8" r="3.6" fill="#4a4ad0"/><circle cx="8" cy="5.8" r="1.7" fill="#14143a"/><circle cx="8.9" cy="4.8" r=".8" fill="#fff"/></svg>
<svg class="i" style="left:1261px;top:160.5px" width="16" height="16" viewBox="0 0 16 16"><path d="M1.2 2.6L8.6 8.6M8.5 .6V8.6" stroke="#2a7ae8" stroke-width="1.1" fill="none"/><ellipse cx="10.3" cy="11.8" rx="5.5" ry="3.5" fill="#000"/></svg>
<div style="position:absolute;left:1281.2px;top:158.3px;width:22.2px;height:21px;box-sizing:border-box;border:1px solid #f1bc60;border-radius:2px;background:linear-gradient(#ffdcae 0%,#ffcf90 42%,#ffb44a 52%,#ffc468 76%,#ffdb8a 100%);box-shadow:0 0 0 1px #9fbdea99;"></div>
<svg class="i" style="left:1284.5px;top:161px" width="16" height="16" viewBox="0 0 16 16"><rect x="1" y="4.5" width="11" height="10.5" fill="#f4f8ff" stroke="#5a7ab8"/><path d="M3 8.5H5M6 8.5H10.5M3 10.5H5M6 10.5H10.5M3 12.5H5M6 12.5H10.5" stroke="#6a8ac8" stroke-width=".9"/><path d="M3.2 5.6L7.5 1.6L11 5L8.6 6.6L6.8 5.2L4.6 7Z" fill="#e8d070" stroke="#8a7a30" stroke-width=".6"/><path d="M8.5 2.2C11 .6 13.5 1 15.2 1.4V6.4C13.5 5.6 12 5.6 10.6 6.2Z" fill="#e0b030"/><rect x="13.6" y="1" width="2.2" height="5.6" fill="#58a858"/></svg>
<svg class="i" style="left:1325px;top:160.8px" width="16.4" height="15" viewBox="0 0 16.4 15"><ellipse cx="8" cy="6" rx="8" ry="6" fill="#f4ff30"/><ellipse cx="8" cy="6" rx="7" ry="5.3" fill="#20e0c0"/><ellipse cx="8.2" cy="6" rx="6" ry="4.7" fill="#1c28f0"/><ellipse cx="8.4" cy="6" rx="4" ry="3.5" fill="#7010c0"/><ellipse cx="8.5" cy="6" rx="2.2" ry="2.1" fill="#f01030"/><rect x="8" y="11.6" width="7.4" height="3" fill="#e02818" stroke="#f08070" stroke-width=".5"/></svg>
<svg class="i" style="left:1348px;top:160.8px" width="16.4" height="17" viewBox="0 0 16.4 17"><ellipse cx="8" cy="6" rx="8" ry="6" fill="#f4ff30"/><ellipse cx="8" cy="6" rx="7" ry="5.3" fill="#20e0c0"/><ellipse cx="8.2" cy="6" rx="6" ry="4.7" fill="#1c28f0"/><ellipse cx="8.4" cy="6" rx="4" ry="3.5" fill="#7010c0"/><ellipse cx="8.5" cy="6" rx="2.2" ry="2.1" fill="#f01030"/><path d="M7.8 11h2.6v-2.6h3v2.6h2.6v3h-2.6v2.6h-3v-2.6h-2.6z" fill="#4a9e4a" stroke="#7cc07c" stroke-width=".8"/></svg>
<svg class="i" style="left:1369.6px;top:160.6px" width="17" height="17" viewBox="0 0 17 17"><path d="M2.4 15L8.2 8L3 5.4L11.2 1.4" stroke="#1a1a1a" stroke-width="1" fill="none"/><g fill="#1478e8"><rect x=".6" y="13" width="3.2" height="3.2"/><rect x="6.6" y="6.6" width="3.2" height="3.2"/><rect x="1.4" y="4" width="3.2" height="3.2"/><rect x="9.6" y="0" width="3.2" height="3.2"/></g><path d="M8.5 11h2.6v-2.6h3v2.6h2.6v3h-2.6v2.6h-3v-2.6h-2.6z" fill="#4a9e4a" stroke="#7cc07c" stroke-width=".8"/></svg>
<span class="t" style="left:1388.60px;top:162.00px;font-size:13px;color:#101010;">Make from geometry</span>
<svg class="i" style="left:1535.8px;top:162.5px" width="16" height="11" viewBox="0 0 16 11"><rect x="0" y="1.6" width="16" height="7.6" fill="#c9d8ec"/><path d="M0 1.6H16M0 9.2H16" stroke="#8aa4cc" stroke-width=".8"/><path d="M3 .5L8 5.4L3 10.3M3 .5H7M3 10.3H7" stroke="#a8b8d0" stroke-width=".8" fill="none"/><path d="M5.5 5.6H11M12.5 1.5V4M11.5 1.6H13.6" stroke="#108040" stroke-width="1" fill="none"/><ellipse cx="12.6" cy="5.7" rx="2.5" ry="1.5" fill="#f01018"/></svg>
<svg class="i" style="left:1559px;top:162px" width="16" height="14" viewBox="0 0 16 14"><rect x="0" y=".4" width="16" height="13" fill="#c3d3ea"/><path d="M0 .5H16M0 13.4H16" stroke="#3a66a8" stroke-width="1"/><path d="M3.4 3.2H14.6M3.4 2V4.6M14.6 2V4.6M1.4 5.6V10.8M.4 5.6H2.6M.4 10.8H2.6" stroke="#0a7a3a" stroke-width="1" fill="none"/><ellipse cx="8.8" cy="7.8" rx="5.8" ry="3" fill="#f80010"/></svg>
<div style="position:absolute;left:1578.3px;top:158.3px;width:22.2px;height:21px;box-sizing:border-box;border:1px solid #f1bc60;border-radius:2px;background:linear-gradient(#ffdcae 0%,#ffcf90 42%,#ffb44a 52%,#ffc468 76%,#ffdb8a 100%);box-shadow:0 0 0 1px #9fbdea99;"></div>
<svg class="i" style="left:1582px;top:162.2px" width="16" height="14" viewBox="0 0 16 14"><rect x="0" y=".3" width="16" height="13" fill="#c3d3ea"/><path d="M0 .5H16M0 13.2H16" stroke="#3a66a8" stroke-width="1"/><ellipse cx="4.8" cy="8.8" rx="3" ry="2" fill="#f80010"/><text x="8.6" y="7.4" font-size="7.5" font-weight="bold" fill="#0a7a3a" font-family="Liberation Sans,sans-serif">3</text></svg>
<svg class="i" style="left:1620.8px;top:161.6px" width="16" height="16" viewBox="0 0 16 16"><rect x=".5" y="1.8" width="11" height="12" rx="1" fill="#c4c4c4" stroke="#a8a8a8"/><rect x="3.4" y=".4" width="5.2" height="3" rx=".8" fill="#d8d8d8" stroke="#a0a0a0" stroke-width=".8"/><path d="M6.6 6.6H13L15.8 9.4V15.4H6.6Z" fill="#dcdcdc" stroke="#9c9c9c" stroke-width=".9"/><path d="M8.4 10H12.6M8.4 12.2H13.6" stroke="#b0b0b0" stroke-width=".9"/></svg>
<span class="t" style="left:1639.80px;top:162.00px;font-size:13px;color:#8b90a2;letter-spacing:-0.861px;">Paste</span>
<svg class="i" style="left:1697.6px;top:161px" width="16.6" height="16.4" viewBox="0 0 16.6 16.4"><rect x="2.5" y="1" width="13" height="13.5" fill="#f4f8ff" stroke="#274a86" stroke-width="1.2"/><rect x="3.6" y="2.2" width="10.8" height="11" fill="#cfe0f6"/><path d="M3.5 6H14.5M3.5 10H14.5M7.3 2V13.5M11 2V13.5" stroke="#2f80d8" stroke-width="1.3"/><rect x="4.2" y="3" width="2.4" height="2.3" fill="#fff"/><rect x="8" y="3" width="2.3" height="2.3" fill="#fff"/><rect x="4.2" y="6.8" width="2.4" height="2.4" fill="#fff"/><rect x="8" y="6.8" width="2.3" height="2.4" fill="#fff"/><rect x="11.7" y="6.8" width="2.3" height="2.4" fill="#e8eefa"/><rect x="4.2" y="10.8" width="2.4" height="2.2" fill="#e0e6f2"/><rect x="8" y="10.8" width="2.3" height="2.2" fill="#d8deee"/><path d="M2.5 15H15.5" stroke="#274a86" stroke-width="1.2"/><path d="M1 2.5H3M1 4.2H3M1 5.9H3M1 7.6H3M1 9.3H3M1 11H3M1 12.7H3" stroke="#1a30a8" stroke-width="1"/><path d="M8.2 10.2h2.6v-2.6h3v2.6h2.6v3h-2.6v2.6h-3v-2.6h-2.6z" fill="#4a9e4a" stroke="#7cc07c" stroke-width=".8"/></svg>
<svg class="i" style="left:1831px;top:165px" width="16.2" height="12" viewBox="0 0 16.2 12"><rect x="1.4" y=".6" width="13.4" height="7" fill="#d4e0f4" stroke="none"/><path d="M0 .6H16.2M0 7.8H16.2" stroke="#3a5a90" stroke-width="1.1"/><path d="M1.2 .6V11.6M15 .6V11.6" stroke="#4a6aa0" stroke-width="1"/></svg>
<svg class="i" style="left:1684px;top:152px" width="48" height="34" viewBox="1684 152 48 34"><ellipse cx="1707.4" cy="169" rx="21.6" ry="15.2" fill="none" stroke="#b00d1e" stroke-width="2"/></svg>
<div style="position:absolute;left:1169px;top:184px;width:684px;height:148px;background:#fff;"></div>
<div style="position:absolute;left:1170px;top:185px;width:626.7px;height:18.4px;background:linear-gradient(#ffffff 0%,#ffffff 40%,#f3f3f4 75%,#eeeeef 100%);border-bottom:1px solid #d5d5d5;"></div>
<div style="position:absolute;left:1211.8000000000002px;top:185px;width:1px;height:18.4px;background:linear-gradient(#f4f4f4,#dcdcdc);"></div>
<div style="position:absolute;left:1212.8000000000002px;top:185px;width:1px;height:18.4px;background:#fff;"></div>
<div style="position:absolute;left:1270.9px;top:185px;width:1px;height:18.4px;background:linear-gradient(#f4f4f4,#dcdcdc);"></div>
<div style="position:absolute;left:1271.9px;top:185px;width:1px;height:18.4px;background:#fff;"></div>
<div style="position:absolute;left:1309.9px;top:185px;width:1px;height:18.4px;background:linear-gradient(#f4f4f4,#dcdcdc);"></div>
<div style="position:absolute;left:1310.9px;top:185px;width:1px;height:18.4px;background:#fff;"></div>
<div style="position:absolute;left:1371.9px;top:185px;width:1px;height:18.4px;background:linear-gradient(#f4f4f4,#dcdcdc);"></div>
<div style="position:absolute;left:1372.9px;top:185px;width:1px;height:18.4px;background:#fff;"></div>
<div style="position:absolute;left:1433.8000000000002px;top:185px;width:1px;height:18.4px;background:linear-gradient(#f4f4f4,#dcdcdc);"></div>
<div style="position:absolute;left:1434.8000000000002px;top:185px;width:1px;height:18.4px;background:#fff;"></div>
<div style="position:absolute;left:1495.9px;top:185px;width:1px;height:18.4px;background:linear-gradient(#f4f4f4,#dcdcdc);"></div>
<div style="position:absolute;left:1496.9px;top:185px;width:1px;height:18.4px;background:#fff;"></div>
<div style="position:absolute;left:1549.0px;top:185px;width:1px;height:18.4px;background:linear-gradient(#f4f4f4,#dcdcdc);"></div>
<div style="position:absolute;left:1550.0px;top:185px;width:1px;height:18.4px;background:#fff;"></div>
<div style="position:absolute;left:1611.9px;top:185px;width:1px;height:18.4px;background:linear-gradient(#f4f4f4,#dcdcdc);"></div>
<div style="position:absolute;left:1612.9px;top:185px;width:1px;height:18.4px;background:#fff;"></div>
<div style="position:absolute;left:1671.9px;top:185px;width:1px;height:18.4px;background:linear-gradient(#f4f4f4,#dcdcdc);"></div>
<div style="position:absolute;left:1672.9px;top:185px;width:1px;height:18.4px;background:#fff;"></div>
<div style="position:absolute;left:1714.7px;top:185px;width:1px;height:18.4px;background:linear-gradient(#f4f4f4,#dcdcdc);"></div>
<div style="position:absolute;left:1715.7px;top:185px;width:1px;height:18.4px;background:#fff;"></div>
<div style="position:absolute;left:1796.1000000000001px;top:185px;width:1px;height:18.4px;background:linear-gradient(#f4f4f4,#dcdcdc);"></div>
<div style="position:absolute;left:1797.1000000000001px;top:185px;width:1px;height:18.4px;background:#fff;"></div>
<span class="t" style="left:1178.00px;top:190.00px;font-size:11px;color:#0a0a14;">ID</span>
<span class="t" style="left:1220.00px;top:190.00px;font-size:11px;color:#0a0a14;letter-spacing:-0.489px;">Amplitude</span>
<span class="t" style="left:1279.20px;top:190.00px;font-size:11px;color:#0a0a14;letter-spacing:-0.349px;">Type</span>
<span class="t" style="left:1317.60px;top:190.00px;font-size:11px;color:#0a0a14;">X1</span>
<span class="t" style="left:1379.70px;top:190.00px;font-size:11px;color:#0a0a14;">X2</span>
<span class="t" style="left:1442.20px;top:190.00px;font-size:11px;color:#0a0a14;letter-spacing:-0.388px;">Depth</span>
<span class="t" style="left:1504.20px;top:190.00px;font-size:11px;color:#0a0a14;letter-spacing:-0.259px;">Height</span>
<span class="t" style="left:1557.00px;top:190.00px;font-size:11px;color:#0a0a14;letter-spacing:-0.240px;">Scan Start</span>
<span class="t" style="left:1620.40px;top:190.00px;font-size:11px;color:#0a0a14;letter-spacing:-0.272px;">Scan End</span>
<span class="t" style="left:1680.50px;top:190.00px;font-size:11px;color:#0a0a14;letter-spacing:-0.437px;">Status</span>
<span class="t" style="left:1722.50px;top:190.00px;font-size:11px;color:#0a0a14;letter-spacing:-0.640px;">Comments</span>
<div style="position:absolute;left:1169.5px;top:204px;width:627.7px;height:44.8px;box-sizing:border-box;border:1px solid #a0a0a0;border-top:1px solid #b8b8b8;background:#fff;"></div>
<div style="position:absolute;left:1212.4px;top:204.6px;width:584px;height:21.4px;background:#3399ff;"></div>
<div style="position:absolute;left:1170px;top:225.8px;width:627px;height:1px;background:#a0a0a0;"></div>
<div style="position:absolute;left:1211.9px;top:204.5px;width:1px;height:44px;background:#a0a0a0;"></div>
<div style="position:absolute;left:1271.0px;top:204.5px;width:1px;height:44px;background:#a0a0a0;"></div>
<div style="position:absolute;left:1310.0px;top:204.5px;width:1px;height:44px;background:#a0a0a0;"></div>
<div style="position:absolute;left:1372.0px;top:204.5px;width:1px;height:44px;background:#a0a0a0;"></div>
<div style="position:absolute;left:1433.9px;top:204.5px;width:1px;height:44px;background:#a0a0a0;"></div>
<div style="position:absolute;left:1496.0px;top:204.5px;width:1px;height:44px;background:#a0a0a0;"></div>
<div style="position:absolute;left:1549.1px;top:204.5px;width:1px;height:44px;background:#a0a0a0;"></div>
<div style="position:absolute;left:1612.0px;top:204.5px;width:1px;height:44px;background:#a0a0a0;"></div>
<div style="position:absolute;left:1672.0px;top:204.5px;width:1px;height:44px;background:#a0a0a0;"></div>
<div style="position:absolute;left:1714.8px;top:204.5px;width:1px;height:44px;background:#a0a0a0;"></div>
<span class="t" style="left:1173.00px;top:211.00px;font-size:11px;color:#000;">1</span>
<span class="t" style="left:1215.80px;top:211.00px;font-size:11px;color:#fff;">50.00</span>
<span class="t" style="left:1314.00px;top:211.00px;font-size:11px;color:#fff;">-0.26</span>
<span class="t" style="left:1376.00px;top:211.00px;font-size:11px;color:#fff;">1.24</span>
<span class="t" style="left:1438.00px;top:211.00px;font-size:11px;color:#fff;">-63.56</span>
<span class="t" style="left:1500.00px;top:211.00px;font-size:11px;color:#fff;">1.50</span>
<span class="t" style="left:1553.00px;top:211.00px;font-size:11px;color:#fff;">0.00</span>
<span class="t" style="left:1615.80px;top:211.00px;font-size:11px;color:#fff;">5.00</span>
<div style="position:absolute;left:1292.2px;top:206.3px;width:17px;height:17px;background:#f0f0f0;"></div>
<svg class="i" style="left:1298.4px;top:213.60000000000002px" width="5" height="2.8" viewBox="0 0 5 2.8"><path d="M0 0H5L2.5 2.8Z" fill="#000"/></svg>
<div style="position:absolute;left:1697.4px;top:206.3px;width:17px;height:17px;background:#f0f0f0;"></div>
<svg class="i" style="left:1703.6000000000001px;top:213.60000000000002px" width="5" height="2.8" viewBox="0 0 5 2.8"><path d="M0 0H5L2.5 2.8Z" fill="#000"/></svg>
<span class="t" style="left:1173.00px;top:233.00px;font-size:11px;color:#000;">2</span>
<span class="t" style="left:1215.80px;top:233.00px;font-size:11px;color:#000;">50.00</span>
<span class="t" style="left:1314.00px;top:233.00px;font-size:11px;color:#000;">-12.76</span>
<span class="t" style="left:1376.00px;top:233.00px;font-size:11px;color:#000;">-11.26</span>
<span class="t" style="left:1438.00px;top:233.00px;font-size:11px;color:#000;">-43.56</span>
<span class="t" style="left:1500.00px;top:233.00px;font-size:11px;color:#000;">1.50</span>
<span class="t" style="left:1553.00px;top:233.00px;font-size:11px;color:#000;">0.00</span>
<span class="t" style="left:1615.80px;top:233.00px;font-size:11px;color:#000;">5.00</span>
<div style="position:absolute;left:1292.2px;top:228.3px;width:17px;height:17px;background:#efefef;"></div>
<svg class="i" style="left:1298.4px;top:235.60000000000002px" width="5" height="2.8" viewBox="0 0 5 2.8"><path d="M0 0H5L2.5 2.8Z" fill="#000"/></svg>
<div style="position:absolute;left:1697.4px;top:228.3px;width:17px;height:17px;background:#efefef;"></div>
<svg class="i" style="left:1703.6000000000001px;top:235.60000000000002px" width="5" height="2.8" viewBox="0 0 5 2.8"><path d="M0 0H5L2.5 2.8Z" fill="#000"/></svg>
<div style="position:absolute;left:1169px;top:332px;width:684px;height:1px;background:#000;"></div>
<div style="position:absolute;left:1169px;top:333px;width:684px;height:175px;background:#f4f4f4;"></div>
<span class="t" style="left:1174.20px;top:337.00px;font-size:13px;color:#000;font-weight:bold;letter-spacing:-0.025px;">Indication Properties</span>
<div style="position:absolute;left:1169px;top:354.2px;width:684px;height:1px;background:#c4c4c4;"></div>
<div style="position:absolute;left:1169px;top:393.2px;width:684px;height:1px;background:#c4c4c4;"></div>
<div style="position:absolute;left:1169px;top:432.2px;width:684px;height:1px;background:#c4c4c4;"></div>
<div style="position:absolute;left:1169px;top:471px;width:684px;height:1px;background:#c4c4c4;"></div>
<div style="position:absolute;left:1211.2px;top:357.2px;width:638px;height:9.5px;background:#808080;border-radius:4.8px;"></div>
<div style="position:absolute;left:1211.2px;top:396.2px;width:638px;height:9.5px;background:#808080;border-radius:4.8px;"></div>
<div style="position:absolute;left:1211.2px;top:435.2px;width:638px;height:9.5px;background:#808080;border-radius:4.8px;"></div>
<svg class="i" style="left:1522px;top:355px" width="16" height="14" viewBox="1522 355 16 14"><circle cx="1528" cy="362" r="2.2" fill="#767676"/><circle cx="1532.4" cy="362" r="2.2" fill="#767676"/><path d="M1530.2 357.5V366.5" stroke="#9c9c9c" stroke-width="1"/></svg>
<div style="position:absolute;left:1210.4px;top:435.1px;width:32px;height:9.6px;box-sizing:border-box;background:#d0d0d0;border:1px solid #a8a8a8;border-radius:4.8px;"></div>
<div style="position:absolute;left:1212.8px;top:437.6px;width:4.6px;height:4.6px;background:#7e7e7e;border-radius:50%;"></div>
<div style="position:absolute;left:1235.6px;top:437.6px;width:4.6px;height:4.6px;background:#7e7e7e;border-radius:50%;"></div>
<svg class="i" style="left:1173.2px;top:357.4px" width="34" height="32" viewBox="0 0 34 32" font-family="Liberation Sans,sans-serif"><text x="-.4" y="11.4" font-size="15.5" font-weight="bold" fill="#00008b" stroke="#00008b" stroke-width=".9">X</text><path d="M11.6 16.2L26 6.2" stroke="#111" stroke-width="1.2" fill="none"/><path d="M24.3 11.1L26.7 5.7L20.8 6.1" stroke="#111" stroke-width="1.4" fill="none"/><path d="M11.6 16.2L29.2 16.2" stroke="#e07b12" stroke-width="1.6" fill="none"/><path d="M25.0 19.2L30.0 16.2L25.0 13.2" stroke="#e07b12" stroke-width="1.8" fill="none"/><path d="M11.6 16.2L11.6 27.6" stroke="#111" stroke-width="1.2" fill="none"/><path d="M8.6 23.4L11.6 28.4L14.6 23.4" stroke="#111" stroke-width="1.4" fill="none"/></svg>
<svg class="i" style="left:1173.2px;top:396.4px" width="34" height="32" viewBox="0 0 34 32" font-family="Liberation Sans,sans-serif"><text x="-.4" y="11.4" font-size="15.5" font-weight="bold" fill="#00008b" stroke="#00008b" stroke-width=".9">Y</text><path d="M11.6 16.2L26 6.2" stroke="#111" stroke-width="1.2" fill="none"/><path d="M24.3 11.1L26.7 5.7L20.8 6.1" stroke="#111" stroke-width="1.4" fill="none"/><path d="M11.6 16.2L29.2 16.2" stroke="#111" stroke-width="1.2" fill="none"/><path d="M25.0 19.2L30.0 16.2L25.0 13.2" stroke="#111" stroke-width="1.4" fill="none"/><path d="M11.6 16.2L11.6 27.6" stroke="#e07b12" stroke-width="1.6" fill="none"/><path d="M8.6 23.4L11.6 28.4L14.6 23.4" stroke="#e07b12" stroke-width="1.8" fill="none"/></svg>
<svg class="i" style="left:1173.2px;top:435.4px" width="34" height="32" viewBox="0 0 34 32" font-family="Liberation Sans,sans-serif"><text x="-.4" y="11.4" font-size="15.5" font-weight="bold" fill="#00008b" stroke="#00008b" stroke-width=".9">Z</text><path d="M11.6 16.2L26 6.2" stroke="#e07b12" stroke-width="1.6" fill="none"/><path d="M24.3 11.1L26.7 5.7L20.8 6.1" stroke="#e07b12" stroke-width="1.8" fill="none"/><path d="M11.6 16.2L29.2 16.2" stroke="#111" stroke-width="1.2" fill="none"/><path d="M25.0 19.2L30.0 16.2L25.0 13.2" stroke="#111" stroke-width="1.4" fill="none"/><path d="M11.6 16.2L11.6 27.6" stroke="#111" stroke-width="1.2" fill="none"/><path d="M8.6 23.4L11.6 28.4L14.6 23.4" stroke="#111" stroke-width="1.4" fill="none"/></svg>
<span class="t" style="left:1223.45px;top:372.80px;font-size:11px;color:#101010;">X1</span>
<div style="position:absolute;left:1241.1px;top:371.3px;width:61.6px;height:14.4px;box-sizing:border-box;border:1px solid #7d7d7d;border-radius:7.2px;background:#dcdcdc;"></div><svg class="i" style="left:1241.1px;top:371.3px" width="61.6" height="14.4" viewBox="0 0 61.6 14.4"><path d="M4 6.6H9.6L6.8 10.4Z" fill="#5a5a5a"/><path d="M51.8 8.6H57.6L54.7 4.6Z" fill="#5a5a5a"/></svg><span class="t" style="left:1259.16px;top:372.80px;font-size:11px;color:#0c1424;">-0.26</span>
<span class="t" style="left:1306.30px;top:372.80px;font-size:11px;color:#101010;letter-spacing:-0.726px;">mm</span>
<span class="t" style="left:1377.78px;top:372.80px;font-size:11px;color:#101010;">Center</span>
<div style="position:absolute;left:1415px;top:371.3px;width:61.6px;height:14.4px;box-sizing:border-box;border:1px solid #7d7d7d;border-radius:7.2px;background:#dcdcdc;"></div><svg class="i" style="left:1415px;top:371.3px" width="61.6" height="14.4" viewBox="0 0 61.6 14.4"><path d="M4 6.6H9.6L6.8 10.4Z" fill="#5a5a5a"/><path d="M51.8 8.6H57.6L54.7 4.6Z" fill="#5a5a5a"/></svg><span class="t" style="left:1434.90px;top:372.80px;font-size:11px;color:#0c1424;">0.49</span>
<span class="t" style="left:1480.20px;top:372.80px;font-size:11px;color:#101010;letter-spacing:-0.726px;">mm</span>
<span class="t" style="left:1542.88px;top:372.80px;font-size:11px;color:#101010;">Width</span>
<div style="position:absolute;left:1575.2px;top:371.3px;width:61.6px;height:14.4px;box-sizing:border-box;border:1px solid #7d7d7d;border-radius:7.2px;background:#dcdcdc;"></div><svg class="i" style="left:1575.2px;top:371.3px" width="61.6" height="14.4" viewBox="0 0 61.6 14.4"><path d="M4 6.6H9.6L6.8 10.4Z" fill="#5a5a5a"/><path d="M51.8 8.6H57.6L54.7 4.6Z" fill="#5a5a5a"/></svg><span class="t" style="left:1595.10px;top:372.80px;font-size:11px;color:#0c1424;">1.50</span>
<span class="t" style="left:1640.40px;top:372.80px;font-size:11px;color:#101010;letter-spacing:-0.726px;">mm</span>
<span class="t" style="left:1732.65px;top:372.80px;font-size:11px;color:#101010;">X1</span>
<div style="position:absolute;left:1750.3px;top:371.3px;width:61.6px;height:14.4px;box-sizing:border-box;border:1px solid #7d7d7d;border-radius:7.2px;background:#dcdcdc;"></div><svg class="i" style="left:1750.3px;top:371.3px" width="61.6" height="14.4" viewBox="0 0 61.6 14.4"><path d="M4 6.6H9.6L6.8 10.4Z" fill="#5a5a5a"/><path d="M51.8 8.6H57.6L54.7 4.6Z" fill="#5a5a5a"/></svg><span class="t" style="left:1770.20px;top:372.80px;font-size:11px;color:#0c1424;">1.24</span>
<span class="t" style="left:1815.50px;top:372.80px;font-size:11px;color:#101010;letter-spacing:-0.726px;">mm</span>
<span class="t" style="left:1224.06px;top:411.80px;font-size:11px;color:#101010;">Z1</span>
<div style="position:absolute;left:1241.1px;top:410.3px;width:61.6px;height:14.4px;box-sizing:border-box;border:1px solid #7d7d7d;border-radius:7.2px;background:#dcdcdc;"></div><svg class="i" style="left:1241.1px;top:410.3px" width="61.6" height="14.4" viewBox="0 0 61.6 14.4"><path d="M4 6.6H9.6L6.8 10.4Z" fill="#5a5a5a"/><path d="M51.8 8.6H57.6L54.7 4.6Z" fill="#5a5a5a"/></svg><span class="t" style="left:1256.10px;top:411.80px;font-size:11px;color:#0c1424;">-63.56</span>
<span class="t" style="left:1306.30px;top:411.80px;font-size:11px;color:#101010;letter-spacing:-0.726px;">mm</span>
<span class="t" style="left:1377.78px;top:411.80px;font-size:11px;color:#101010;">Center</span>
<div style="position:absolute;left:1415px;top:410.3px;width:61.6px;height:14.4px;box-sizing:border-box;border:1px solid #7d7d7d;border-radius:7.2px;background:#dcdcdc;"></div><svg class="i" style="left:1415px;top:410.3px" width="61.6" height="14.4" viewBox="0 0 61.6 14.4"><path d="M4 6.6H9.6L6.8 10.4Z" fill="#5a5a5a"/><path d="M51.8 8.6H57.6L54.7 4.6Z" fill="#5a5a5a"/></svg><span class="t" style="left:1430.00px;top:411.80px;font-size:11px;color:#0c1424;">-62.81</span>
<span class="t" style="left:1480.20px;top:411.80px;font-size:11px;color:#101010;letter-spacing:-0.726px;">mm</span>
<span class="t" style="left:1539.20px;top:411.80px;font-size:11px;color:#101010;">Height</span>
<div style="position:absolute;left:1575.2px;top:410.3px;width:61.6px;height:14.4px;box-sizing:border-box;border:1px solid #7d7d7d;border-radius:7.2px;background:#dcdcdc;"></div><svg class="i" style="left:1575.2px;top:410.3px" width="61.6" height="14.4" viewBox="0 0 61.6 14.4"><path d="M4 6.6H9.6L6.8 10.4Z" fill="#5a5a5a"/><path d="M51.8 8.6H57.6L54.7 4.6Z" fill="#5a5a5a"/></svg><span class="t" style="left:1595.10px;top:411.80px;font-size:11px;color:#0c1424;">1.50</span>
<span class="t" style="left:1640.40px;top:411.80px;font-size:11px;color:#101010;letter-spacing:-0.726px;">mm</span>
<span class="t" style="left:1733.26px;top:411.80px;font-size:11px;color:#101010;">Z2</span>
<div style="position:absolute;left:1750.3px;top:410.3px;width:61.6px;height:14.4px;box-sizing:border-box;border:1px solid #7d7d7d;border-radius:7.2px;background:#dcdcdc;"></div><svg class="i" style="left:1750.3px;top:410.3px" width="61.6" height="14.4" viewBox="0 0 61.6 14.4"><path d="M4 6.6H9.6L6.8 10.4Z" fill="#5a5a5a"/><path d="M51.8 8.6H57.6L54.7 4.6Z" fill="#5a5a5a"/></svg><span class="t" style="left:1765.30px;top:411.80px;font-size:11px;color:#0c1424;">-62.06</span>
<span class="t" style="left:1815.50px;top:411.80px;font-size:11px;color:#101010;letter-spacing:-0.726px;">mm</span>
<span class="t" style="left:1223.45px;top:450.70px;font-size:11px;color:#101010;">Y1</span>
<div style="position:absolute;left:1241.1px;top:449.2px;width:61.6px;height:14.4px;box-sizing:border-box;border:1px solid #7d7d7d;border-radius:7.2px;background:#dcdcdc;"></div><svg class="i" style="left:1241.1px;top:449.2px" width="61.6" height="14.4" viewBox="0 0 61.6 14.4"><path d="M4 6.6H9.6L6.8 10.4Z" fill="#5a5a5a"/><path d="M51.8 8.6H57.6L54.7 4.6Z" fill="#5a5a5a"/></svg><span class="t" style="left:1261.00px;top:450.70px;font-size:11px;color:#0c1424;">0.00</span>
<span class="t" style="left:1306.30px;top:450.70px;font-size:11px;color:#101010;letter-spacing:-0.726px;">mm</span>
<span class="t" style="left:1377.78px;top:450.70px;font-size:11px;color:#101010;">Center</span>
<div style="position:absolute;left:1415px;top:449.2px;width:61.6px;height:14.4px;box-sizing:border-box;border:1px solid #7d7d7d;border-radius:7.2px;background:#dcdcdc;"></div><svg class="i" style="left:1415px;top:449.2px" width="61.6" height="14.4" viewBox="0 0 61.6 14.4"><path d="M4 6.6H9.6L6.8 10.4Z" fill="#5a5a5a"/><path d="M51.8 8.6H57.6L54.7 4.6Z" fill="#5a5a5a"/></svg><span class="t" style="left:1434.90px;top:450.70px;font-size:11px;color:#0c1424;">2.50</span>
<span class="t" style="left:1480.20px;top:450.70px;font-size:11px;color:#101010;letter-spacing:-0.726px;">mm</span>
<span class="t" style="left:1537.36px;top:450.70px;font-size:11px;color:#101010;">Length</span>
<div style="position:absolute;left:1575.2px;top:449.2px;width:61.6px;height:14.4px;box-sizing:border-box;border:1px solid #7d7d7d;border-radius:7.2px;background:#dcdcdc;"></div><svg class="i" style="left:1575.2px;top:449.2px" width="61.6" height="14.4" viewBox="0 0 61.6 14.4"><path d="M4 6.6H9.6L6.8 10.4Z" fill="#5a5a5a"/><path d="M51.8 8.6H57.6L54.7 4.6Z" fill="#5a5a5a"/></svg><span class="t" style="left:1595.10px;top:450.70px;font-size:11px;color:#0c1424;">5.00</span>
<span class="t" style="left:1640.40px;top:450.70px;font-size:11px;color:#101010;letter-spacing:-0.726px;">mm</span>
<span class="t" style="left:1732.65px;top:450.70px;font-size:11px;color:#101010;">Y2</span>
<div style="position:absolute;left:1750.3px;top:449.2px;width:61.6px;height:14.4px;box-sizing:border-box;border:1px solid #7d7d7d;border-radius:7.2px;background:#dcdcdc;"></div><svg class="i" style="left:1750.3px;top:449.2px" width="61.6" height="14.4" viewBox="0 0 61.6 14.4"><path d="M4 6.6H9.6L6.8 10.4Z" fill="#5a5a5a"/><path d="M51.8 8.6H57.6L54.7 4.6Z" fill="#5a5a5a"/></svg><span class="t" style="left:1770.20px;top:450.70px;font-size:11px;color:#0c1424;">5.00</span>
<span class="t" style="left:1815.50px;top:450.70px;font-size:11px;color:#101010;letter-spacing:-0.726px;">mm</span>
<svg class="i" style="left:1172.6px;top:474px" width="32" height="31" viewBox="0 0 32 31"><path d="M1.5 0V30M0 29.6H31" stroke="#111" stroke-width="1.2" stroke-dasharray="1.6 1.2"/><path d="M1.5 0V30.4H31" stroke="#111" stroke-width=".7" fill="none"/><path d="M14.6 12V29" stroke="#888" stroke-width="1.4"/><path d="M2 29C7 28.6 10.5 27 12.6 20C13.6 15 14 8 14.4 .6H15.6C16 12 16.4 24 17.6 28C18.4 29.2 24 29 31 29" fill="none" stroke="#e07a10" stroke-width="1.7"/></svg>
<div style="position:absolute;left:1212px;top:483.2px;width:536px;height:5.8px;box-sizing:border-box;border:1px solid #8c8c8c;border-radius:3px;background:#d8d8d8;"></div>
<div style="position:absolute;left:1392px;top:483.2px;width:356px;height:5.8px;background:#6c7d8f;border-radius:0 3px 3px 0;"></div>
<div style="position:absolute;left:1387.8px;top:480.4px;width:8.2px;height:11.2px;box-sizing:border-box;border:1px solid #6a6a6a;border-radius:2px;background:linear-gradient(90deg,#e0e0e0,#b8b8b8);"></div>
<div style="position:absolute;left:1750.3px;top:479.4px;width:61.6px;height:14.4px;box-sizing:border-box;border:1px solid #7d7d7d;border-radius:7.2px;background:#dcdcdc;"></div><svg class="i" style="left:1750.3px;top:479.4px" width="61.6" height="14.4" viewBox="0 0 61.6 14.4"><path d="M4 6.6H9.6L6.8 10.4Z" fill="#5a5a5a"/><path d="M51.8 8.6H57.6L54.7 4.6Z" fill="#5a5a5a"/></svg><span class="t" style="left:1767.14px;top:480.90px;font-size:11px;color:#0c1424;">50.00</span>
<span class="t" style="left:1815.60px;top:481.00px;font-size:11px;color:#101010;">%</span>
<!-- ribbon -->
<div style="position:absolute;left:0px;top:925px;width:1920px;height:1px;background:#5c5c5c;"></div>
<div style="position:absolute;left:0px;top:926px;width:1920px;height:16px;background:#fff;"></div>
<span class="t" style="left:6.30px;top:928.00px;font-size:12px;color:#1a1a1a;font-weight:bold;">:</span>
<div style="position:absolute;left:0px;top:942px;width:1920px;height:1px;background:#a4a7b0;"></div>
<div style="position:absolute;left:0px;top:943px;width:1919px;height:69px;background:linear-gradient(#fdfdfe 0%,#f5f6f8 35%,#ecedf1 75%,#e8eaee 100%);"></div>
<div style="position:absolute;left:1919px;top:942px;width:1px;height:71px;background:#979ba6;"></div>
<div style="position:absolute;left:0px;top:1012px;width:1920px;height:2px;background:linear-gradient(#8a8e9a,#a4a8b2);"></div>
<svg width="0" height="0" style="position:absolute"><defs><linearGradient id="gFill" x1="0" y1="0" x2="1" y2="1"><stop offset="0" stop-color="#fff"/><stop offset=".45" stop-color="#e8eef8"/><stop offset="1" stop-color="#b4c8e4"/></linearGradient></defs></svg>
<div style="position:absolute;left:150.8px;top:943px;width:1px;height:69px;background:#a2a6b2;"></div>
<div style="position:absolute;left:151.8px;top:943px;width:1px;height:69px;background:#fdfdfe;"></div>
<div style="position:absolute;left:231.8px;top:943px;width:1px;height:69px;background:#a2a6b2;"></div>
<div style="position:absolute;left:232.8px;top:943px;width:1px;height:69px;background:#fdfdfe;"></div>
<div style="position:absolute;left:389.79999999999995px;top:943px;width:1px;height:69px;background:#a2a6b2;"></div>
<div style="position:absolute;left:390.79999999999995px;top:943px;width:1px;height:69px;background:#fdfdfe;"></div>
<div style="position:absolute;left:588.9px;top:943px;width:1px;height:69px;background:#a2a6b2;"></div>
<div style="position:absolute;left:589.9px;top:943px;width:1px;height:69px;background:#fdfdfe;"></div>
<div style="position:absolute;left:859.9px;top:943px;width:1px;height:69px;background:#a2a6b2;"></div>
<div style="position:absolute;left:860.9px;top:943px;width:1px;height:69px;background:#fdfdfe;"></div>
<div style="position:absolute;left:1233.0px;top:943px;width:1px;height:69px;background:#a2a6b2;"></div>
<div style="position:absolute;left:1234.0px;top:943px;width:1px;height:69px;background:#fdfdfe;"></div>
<div style="position:absolute;left:471.9px;top:944.6px;width:2px;height:52px;background:#c9cad0;"></div>
<div style="position:absolute;left:745.9px;top:944.6px;width:2px;height:52px;background:#c9cad0;"></div>
<div style="position:absolute;left:803.9px;top:944.6px;width:2px;height:52px;background:#c9cad0;"></div>
<div style="position:absolute;left:966px;top:944.6px;width:2px;height:52px;background:#c9cad0;"></div>
<div style="position:absolute;left:0.6px;top:943px;width:1px;height:69px;background:#fff;"></div>
<span class="t" style="left:60.20px;top:999.00px;font-size:11px;color:#47505f;font-weight:bold;letter-spacing:0.321px;">Tools</span>
<span class="t" style="left:180.40px;top:999.00px;font-size:11px;color:#47505f;font-weight:bold;letter-spacing:-0.631px;">Snap</span>
<span class="t" style="left:301.50px;top:999.00px;font-size:11px;color:#47505f;font-weight:bold;letter-spacing:-0.059px;">Edit</span>
<span class="t" style="left:451.30px;top:999.00px;font-size:11px;color:#47505f;font-weight:bold;letter-spacing:0.064px;">Add Geometry</span>
<span class="t" style="left:713.40px;top:999.00px;font-size:11px;color:#47505f;font-weight:bold;letter-spacing:-0.373px;">Style</span>
<span class="t" style="left:998.40px;top:999.00px;font-size:11px;color:#47505f;font-weight:bold;letter-spacing:0.055px;">Construction Aids</span>
<svg class="i" style="left:8.6px;top:949.6px" width="16" height="16" viewBox="0 0 16 16"><path d="M1.5 .8V12.6L4.6 9.8L6.8 15L9 14L6.8 9H10.6Z" fill="#fff" stroke="#2a4a80" stroke-width="1" stroke-linejoin="round"/></svg>
<svg class="i" style="left:40.4px;top:950px" width="16" height="16" viewBox="0 0 16 16"><path d="M1.8 15.4V6.2A4.2 4.2 0 0 1 10.2 6.2V12.6" fill="none" stroke="#a01828" stroke-width="3.2"/><path d="M2.8 14V6.4A3.4 3.4 0 0 1 6.6 3" fill="none" stroke="#e06070" stroke-width=".9"/><rect x=".2" y="13.4" width="3.2" height="2.4" fill="#444"/><rect x="8.6" y="11" width="3.2" height="2.2" fill="#666"/><circle cx="13" cy="13.8" r="1.9" fill="#fff" stroke="#1a70d0" stroke-width="1.1"/></svg>
<svg class="i" style="left:56.8px;top:956px" width="5" height="3" viewBox="0 0 5 3"><path d="M0 0H5L2.5 3Z" fill="#707070"/></svg>
<svg class="i" style="left:71px;top:950.4px" width="16" height="15" viewBox="0 0 16 15"><rect x=".6" y="1" width="14.4" height="12.6" rx="1.5" fill="#d8e2f4" stroke="#3a5a98" stroke-width="1.1"/><rect x="2.4" y="3" width="10.8" height="8.6" fill="#3a64c8"/><path d="M4 5.2H8M4 7.4H11.6M4 9.6H11.6" stroke="#e8f0ff" stroke-width="1.1"/></svg>
<svg class="i" style="left:89px;top:956px" width="5" height="3" viewBox="0 0 5 3"><path d="M0 0H5L2.5 3Z" fill="#707070"/></svg>
<div style="position:absolute;left:99.3px;top:947.6px;width:24.5px;height:21px;box-sizing:border-box;border:1px solid #f1bc60;border-radius:2px;background:linear-gradient(#ffdcae 0%,#ffcf90 42%,#ffb44a 52%,#ffc468 76%,#ffdb8a 100%);box-shadow:0 0 0 1px #9fbdea99;"></div>
<svg class="i" style="left:103.4px;top:953.6px" width="16" height="9" viewBox="0 0 16 9"><rect x=".5" y=".5" width="15" height="8" fill="#fff" stroke="#8a8a9a" stroke-width=".9"/><path d="M2.4 2.4L4.6 4.4L2.4 6.4" fill="none" stroke="#2a3aa8" stroke-width="1"/><path d="M5.8 6.8H9.4" stroke="#2a3aa8" stroke-width="1.2"/></svg>
<svg class="i" style="left:128px;top:950.4px" width="16" height="14" viewBox="0 0 16 14"><rect x=".5" y=".8" width="14.6" height="12.4" fill="#fff" stroke="#5a6a90" stroke-width="1"/><rect x="9" y="1.2" width="5.8" height="11.6" fill="#7a86a4"/><path d="M10.4 3H13.4M10.4 5H13.4M10.4 7H13.4M10.4 9H13.4M10.4 11H13.4" stroke="#dfe4f0" stroke-width=".9"/></svg>
<svg class="i" style="left:6.8px;top:976px" width="16" height="16" viewBox="0 0 16 16"><path d="M2 14.6L1 12.6L7.4 6.4C6.4 3.6 8.6 .8 11.6 1.2L9.6 3.6L10.4 5.8L12.8 6.2L14.8 4C15.4 7 13 9.6 9.8 8.8L3.6 15Z" fill="#a8c0e8" stroke="#4a6aa8" stroke-width="1" stroke-linejoin="round"/><circle cx="3" cy="13.2" r=".9" fill="#fff"/></svg>
<svg class="i" style="left:25px;top:982px" width="5" height="3" viewBox="0 0 5 3"><path d="M0 0H5L2.5 3Z" fill="#707070"/></svg>
<svg class="i" style="left:40px;top:976.6px" width="15" height="15" viewBox="0 0 15 15"><path d="M3.6 1.2H15L11.4 5.6H0Z" fill="#62b862" stroke="#2e8a2e" stroke-width=".6"/><path d="M3.6 5.8H15L11.4 10H0Z" fill="#f4dc78" stroke="#d8a820" stroke-width=".6"/><path d="M3.6 10.4H15L11.4 14.6H0Z" fill="#88b4f0" stroke="#3a70c8" stroke-width=".6"/></svg>
<svg class="i" style="left:56.8px;top:982px" width="5" height="3" viewBox="0 0 5 3"><path d="M0 0H5L2.5 3Z" fill="#707070"/></svg>
<svg class="i" style="left:71px;top:976px" width="16" height="16" viewBox="0 0 16 16"><path d="M0 3.4V.6H3M12 .6H15V3.4M0 10V13H3M13 13H15V11" fill="none" stroke="#1818e8" stroke-width="1.3"/><rect x="2.6" y="2.6" width="9" height="9" fill="#fff" stroke="#000" stroke-width="1.4"/><path d="M10.6 11L14.6 14.8" stroke="#b08820" stroke-width="2"/><circle cx="8.6" cy="8.4" r="3.6" fill="#d8e6f8" stroke="#8a98a8" stroke-width="1"/><circle cx="7.8" cy="7.4" r="1.3" fill="#fff"/></svg>
<svg class="i" style="left:89px;top:982px" width="5" height="3" viewBox="0 0 5 3"><path d="M0 0H5L2.5 3Z" fill="#707070"/></svg>
<svg class="i" style="left:103px;top:976.6px" width="17" height="16" viewBox="0 0 17 16"><path d="M2.6 1.4V13.6H5.4M2.6 7.4H5.4" fill="none" stroke="#1a68d8" stroke-width="1.2"/><rect x=".4" y=".4" width="7.4" height="2.6" fill="#4a90e8" stroke="#1a60c8" stroke-width=".7"/><rect x="5.6" y="6.2" width="8" height="2.6" fill="#4a90e8" stroke="#1a60c8" stroke-width=".7"/><rect x="5.6" y="12.2" width="8" height="2.6" fill="#4a90e8" stroke="#1a60c8" stroke-width=".7"/><path d="M6.6 9.8L7.4 7.4L13.6 1.6L15.6 3.4L9.4 9.2Z" fill="#f0b828" stroke="#7a5810" stroke-width=".6"/><path d="M13.6 1.6L14.6 .8L16.2 2.4L15.6 3.4Z" fill="#e82020"/><path d="M6.6 9.8L7.2 8L8.6 9.2Z" fill="#222"/></svg>
<svg class="i" style="left:121px;top:982px" width="5" height="3" viewBox="0 0 5 3"><path d="M0 0H5L2.5 3Z" fill="#707070"/></svg>
<svg class="i" style="left:159px;top:950px" width="16" height="16" viewBox="0 0 16 16"><path d="M2.6 13.6L13.4 2.6" stroke="#000" stroke-width="1.5"/><circle cx="2.4" cy="13.6" r="2.1" fill="#ffe818" stroke="#1a50c8" stroke-width="1"/><circle cx="13.6" cy="2.4" r="2.1" fill="#ffe818" stroke="#1a50c8" stroke-width="1"/></svg>
<svg class="i" style="left:183.6px;top:949.6px" width="16" height="16" viewBox="0 0 16 16"><path d="M1.2 14.6L15 1" stroke="#000" stroke-width="1.5"/><circle cx="8.2" cy="7.8" r="2.1" fill="#ffe818" stroke="#1a50c8" stroke-width="1"/></svg>
<svg class="i" style="left:208.4px;top:950.4px" width="16" height="16" viewBox="0 0 16 16"><path d="M1 13.6L13.8 1.6" stroke="#000" stroke-width="1.5"/><circle cx="13.4" cy="9.8" r="2" fill="#fff" stroke="#333" stroke-width="1"/><circle cx="9.4" cy="5.6" r="2.1" fill="#ffe818" stroke="#1a50c8" stroke-width="1"/></svg>
<svg class="i" style="left:158.6px;top:976px" width="16" height="16" viewBox="0 0 16 16"><path d="M1.6 1.4V14.4H14.6" fill="none" stroke="#555" stroke-width="1"/><path d="M1.6 6.4L5.4 8.6M6 14.4C8 13.2 8.6 12.4 9.4 11.2" fill="none" stroke="#777" stroke-width=".8"/><path d="M1.4 14.6L13 3" stroke="#000" stroke-width="1.5"/><circle cx="13.4" cy="2.6" r="2.1" fill="#ffe818" stroke="#1a50c8" stroke-width="1"/></svg>
<svg class="i" style="left:183px;top:976px" width="17" height="16" viewBox="0 0 17 16"><path d="M7.4 .4V15.6M1 9.6H16.4" stroke="#129012" stroke-width="1.1"/><path d="M6.4 10.6L14.4 2.6" stroke="#000" stroke-width="1.5"/><circle cx="7.4" cy="9.6" r="2.1" fill="#ffe818" stroke="#1a50c8" stroke-width="1"/><circle cx="14.4" cy="2.6" r="2.1" fill="#ffe818" stroke="#1a50c8" stroke-width="1"/></svg>
<div style="position:absolute;left:205.4px;top:973.4px;width:23.3px;height:21.2px;box-sizing:border-box;border:1px solid #f1bc60;border-radius:2px;background:linear-gradient(#ffdcae 0%,#ffcf90 42%,#ffb44a 52%,#ffc468 76%,#ffdb8a 100%);box-shadow:0 0 0 1px #9fbdea99;"></div>
<svg class="i" style="left:208.6px;top:975.8px" width="17" height="16" viewBox="0 0 17 16"><path d="M3 0V16M8 0V16M13 0V16M.4 3H16.4M.4 8H16.4M.4 13H16.4" stroke="#3a68c8" stroke-width="1.1"/><circle cx="8" cy="8" r="2" fill="#ffe818" stroke="#1a50c8" stroke-width="1"/></svg>
<svg class="i" style="left:240px;top:950.4px" width="16" height="15" viewBox="0 0 16 15"><rect x="4.6" y=".6" width="9.6" height="9.4" fill="#a8c4f4" stroke="#2a5ac8" stroke-width="1"/><path d="M3 2.6H7L10 5.6V9.6L7 12.6H3L.4 9.6V5.6Z" fill="#a8d8a0" stroke="#128a12" stroke-width="1"/><path d="M0 13.8H3.4" stroke="#000" stroke-width="1.2"/><path d="M5.4 14.2L6.2 11.6L12.4 5.4L14.4 7.2L8.2 13.4Z" fill="#f0d060" stroke="#8a6a18" stroke-width=".6"/><path d="M12.4 5.4L13.4 4.4L15.2 6.2L14.4 7.2Z" fill="#d87058"/><path d="M5.4 14.2L6 12.4L7.4 13.6Z" fill="#333"/></svg>
<svg class="i" style="left:256.6px;top:956px" width="5" height="3" viewBox="0 0 5 3"><path d="M0 0H5L2.5 3Z" fill="#707070"/></svg>
<svg class="i" style="left:270.2px;top:950.2px" width="16" height="16" viewBox="0 0 16 16"><path d="M0 14.4H16" stroke="#a8a8a8" stroke-width="1"/><path d="M3 13.4L14.6 1V8L8.4 14.4H4.4Z" fill="#c8c8c8" stroke="#a0a0a0" stroke-width=".7"/><path d="M3 13.4L7.6 8.6L10.4 11.4L8.4 14.4H4.4Z" fill="#b0b0b0"/></svg>
<svg class="i" style="left:293.8px;top:950px" width="16.4" height="15" viewBox="0 0 16.4 15"><rect x=".5" y="7.8" width="6.4" height="6.6" fill="#d0d0d0" stroke="#b8b8b8"/><rect x="9.4" y="7.8" width="6.4" height="6.6" fill="#d8d8d8" stroke="#a8a8a8"/><path d="M12.6 0V6M9.6 3H15.6" stroke="#9a9a9a" stroke-width="1.8"/></svg>
<svg class="i" style="left:320.6px;top:950.6px" width="11" height="15" viewBox="0 0 11 15"><path d="M2.4 .6L7.4 10M8 .6L3 10" stroke="#a0a0a0" stroke-width="1.5"/><circle cx="2.6" cy="12" r="2" fill="none" stroke="#9a9a9a" stroke-width="1.4"/><circle cx="7.8" cy="12" r="2" fill="none" stroke="#9a9a9a" stroke-width="1.4"/></svg>
<svg class="i" style="left:343px;top:950.6px" width="15.4" height="15" viewBox="0 0 15.4 15"><path d="M.5 .6H5L7.6 3.2V10H.5Z" fill="#dcdcdc" stroke="#b8b8b8" stroke-width=".9"/><path d="M2 3.4H5M2 5.4H6M2 7.4H6" stroke="#b4b4b4" stroke-width=".7"/><path d="M6.6 4.4H11.6L14.6 7.4V14.4H6.6Z" fill="#d8d8d8" stroke="#a8a8a8" stroke-width=".9"/><path d="M8.4 8H12M8.4 10H13M8.4 12H13" stroke="#a8a8a8" stroke-width=".7"/></svg>
<svg class="i" style="left:368px;top:950px" width="16.4" height="16" viewBox="0 0 16.4 16"><rect x=".6" y="2" width="11.6" height="12" rx="1" fill="#e8b020" stroke="#9a6a08" stroke-width=".9"/><path d="M1.6 3H6V13H1.6Z" fill="#f8d860" opacity=".7"/><rect x="3.6" y=".4" width="5.4" height="3.2" rx="1" fill="#e8d8a0" stroke="#6a5a30" stroke-width=".8"/><path d="M7 7.4H13.4L16 10V15.4H7Z" fill="#eef2fa" stroke="#4a5a88" stroke-width=".9"/><path d="M8.6 10.4H12M8.6 12.6H14" stroke="#6a7ab0" stroke-width=".9"/><path d="M7.4 15.6H16" stroke="#3a2a10" stroke-width=".9"/></svg>
<svg class="i" style="left:240.6px;top:976.6px" width="16" height="16" viewBox="0 0 16 16"><rect x=".5" y=".6" width="7" height="7" fill="#d4d4d4" stroke="#b4b4b4"/><rect x="8.4" y="8.4" width="7" height="6.4" fill="#c0c0c0" stroke="#a8a8a8"/><rect x="4" y="3.6" width="8" height="8" fill="#d8d8d8" stroke="#aaa"/></svg>
<svg class="i" style="left:265.6px;top:976.6px" width="14" height="15" viewBox="0 0 14 15"><path d="M.4 13.6L6.4 2.4V13.6Z" fill="#b4b4b4"/><path d="M6.4 2.4L4 13.6H6.4Z" fill="#8e8e8e"/><path d="M9 3C11.6 2.4 13 3.8 12.8 6.4" fill="none" stroke="#9a9a9a" stroke-width="1.1"/><path d="M8 3.2L10.6 1.2V5Z" fill="#9a9a9a"/></svg>
<svg class="i" style="left:287.8px;top:976.4px" width="15.4" height="15.4" viewBox="0 0 15.4 15.4"><path d="M7.6 1V15M.6 8H14.8" stroke="#b0b0b0" stroke-width="1"/><rect x="5.6" y="0" width="4.2" height="2.2" fill="#c8c8c8" stroke="#aaa" stroke-width=".6"/><rect x="5.6" y="13" width="4.2" height="2.2" fill="#c8c8c8" stroke="#aaa" stroke-width=".6"/><rect x="0" y="6" width="2" height="4" fill="#c8c8c8" stroke="#aaa" stroke-width=".6"/><rect x="13" y="6" width="2" height="4" fill="#c8c8c8" stroke="#aaa" stroke-width=".6"/><rect x="5.4" y="5.8" width="4.4" height="4.4" fill="#b8b8b8" stroke="#a0a0a0" stroke-width=".6"/></svg>
<svg class="i" style="left:343.6px;top:976px" width="16.6" height="16.6" viewBox="0 0 16.6 16.6"><rect x="1.6" y="1.6" width="9" height="9" fill="none" stroke="#8c8c8c" stroke-width="1.1"/><rect x="6" y="6" width="9" height="9" fill="none" stroke="#8c8c8c" stroke-width="1.1"/><rect x="0.20000000000000018" y="0.20000000000000018" width="2.8" height="2.8" fill="#8c8c8c"/><rect x="13.6" y="0.0" width="2.8" height="2.8" fill="#8c8c8c"/><rect x="0.20000000000000018" y="13.6" width="2.8" height="2.8" fill="#8c8c8c"/><rect x="13.6" y="13.6" width="2.8" height="2.8" fill="#8c8c8c"/></svg>
<svg class="i" style="left:368px;top:976px" width="16.6" height="16.6" viewBox="0 0 16.6 16.6"><rect x="1.6" y="1.6" width="9" height="9" fill="none" stroke="#8c8c8c" stroke-width="1.1"/><rect x="6" y="6" width="9" height="9" fill="none" stroke="#8c8c8c" stroke-width="1.1"/><rect x="0.20000000000000018" y="0.20000000000000018" width="2.8" height="2.8" fill="#8c8c8c"/><rect x="9.2" y="0.20000000000000018" width="2.8" height="2.8" fill="#8c8c8c"/><rect x="0.20000000000000018" y="9.2" width="2.8" height="2.8" fill="#8c8c8c"/><rect x="4.6" y="4.6" width="2.8" height="2.8" fill="#8c8c8c"/><rect x="13.6" y="4.6" width="2.8" height="2.8" fill="#8c8c8c"/><rect x="4.6" y="13.6" width="2.8" height="2.8" fill="#8c8c8c"/><rect x="13.6" y="13.6" width="2.8" height="2.8" fill="#8c8c8c"/></svg>
<svg class="i" style="left:398.4px;top:950.2px" width="16" height="15.4" viewBox="0 0 16 15.4"><path d="M1.8 13.2L13.6 1.6" stroke="#128212" stroke-width="1.5"/><rect x="0.40000000000000013" y="12.0" width="2.8" height="2.8" fill="#2a62a8"/><rect x="12.2" y="0.20000000000000018" width="2.8" height="2.8" fill="#2a62a8"/></svg>
<svg class="i" style="left:424.4px;top:950.2px" width="16" height="15.4" viewBox="0 0 16 15.4"><path d="M1.4 1.6L5 13.4L7.8 1.6L11.4 13.2" fill="none" stroke="#128212" stroke-width="1.4" stroke-linejoin="bevel"/><rect x="0.09999999999999987" y="0.30000000000000004" width="2.6" height="2.6" fill="#2a62a8"/><rect x="3.7" y="12.1" width="2.6" height="2.6" fill="#2a62a8"/><rect x="6.5" y="0.30000000000000004" width="2.6" height="2.6" fill="#2a62a8"/><rect x="10.1" y="11.899999999999999" width="2.6" height="2.6" fill="#2a62a8"/></svg>
<svg class="i" style="left:448.4px;top:950.2px" width="16" height="15.4" viewBox="0 0 16 15.4"><path d="M1.6 14.2C2.4 7 7 2.4 15 1.4" fill="none" stroke="#128212" stroke-width="1.5"/><rect x="0.20000000000000018" y="12.799999999999999" width="2.8" height="2.8" fill="#2a62a8"/><rect x="13.4" y="0.0" width="2.8" height="2.8" fill="#2a62a8"/><rect x="4.8" y="4.6" width="2" height="2" fill="#2a62a8"/></svg>
<svg class="i" style="left:481.6px;top:950.2px" width="16" height="15.4" viewBox="0 0 16 15.4"><path d="M1.8 13.2L13.6 1.6" stroke="#111" stroke-width="1.5"/><rect x="0.40000000000000013" y="12.0" width="2.8" height="2.8" fill="#2a62a8"/><rect x="12.2" y="0.20000000000000018" width="2.8" height="2.8" fill="#2a62a8"/></svg>
<svg class="i" style="left:507.2px;top:950.2px" width="16" height="15.4" viewBox="0 0 16 15.4"><path d="M1.4 1.6L5 13.4L7.8 1.6L11.4 13.2" fill="none" stroke="#111" stroke-width="1.4" stroke-linejoin="bevel"/><rect x="0.09999999999999987" y="0.30000000000000004" width="2.6" height="2.6" fill="#2a62a8"/><rect x="3.7" y="12.1" width="2.6" height="2.6" fill="#2a62a8"/><rect x="6.5" y="0.30000000000000004" width="2.6" height="2.6" fill="#2a62a8"/><rect x="10.1" y="11.899999999999999" width="2.6" height="2.6" fill="#2a62a8"/></svg>
<svg class="i" style="left:531px;top:950.2px" width="16" height="15.4" viewBox="0 0 16 15.4"><path d="M1.6 14.2C2.4 7 7 2.4 15 1.4" fill="none" stroke="#666" stroke-width="1.5"/><rect x="0.20000000000000018" y="12.799999999999999" width="2.8" height="2.8" fill="#2a62a8"/><rect x="13.4" y="0.0" width="2.8" height="2.8" fill="#2a62a8"/><rect x="4.8" y="4.6" width="2" height="2" fill="#2a62a8"/></svg>
<svg class="i" style="left:555.8px;top:950.6px" width="16" height="15" viewBox="0 0 16 15"><path d="M2 .6V13.6M14 .6V13.6M2 3.6H14" fill="none" stroke="#2a5a98" stroke-width="1.2"/><path d="M2 3.6L5 1.8V5.4ZM14 3.6L11 1.8V5.4Z" fill="#2a5a98"/><rect x="0.6000000000000001" y="12.2" width="2.8" height="2.8" fill="#2a62a8"/><rect x="12.6" y="12.2" width="2.8" height="2.8" fill="#2a62a8"/></svg>
<svg class="i" style="left:576px;top:956.6px" width="5" height="3" viewBox="0 0 5 3"><path d="M0 0H5L2.5 3Z" fill="#707070"/></svg>
<svg class="i" style="left:398.5px;top:976.4px" width="16" height="16" viewBox="0 0 16 16"><circle cx="7.6" cy="7.6" r="6.8" fill="#e4ecf8" stroke="#128212" stroke-width="1"/><circle cx="7.6" cy="7.6" r="1.8" fill="#128212"/></svg>
<svg class="i" style="left:422.6px;top:976.4px" width="16" height="16" viewBox="0 0 16 16"><path d="M1.2 1.2H7.4L14.6 8V14.6H1.2Z" fill="url(#gFill)" stroke="#128212" stroke-width="1.1"/><rect x="0.19999999999999996" y="0.19999999999999996" width="2" height="2" fill="#2a62a8"/><rect x="6.4" y="0.19999999999999996" width="2" height="2" fill="#2a62a8"/><rect x="13.6" y="7.0" width="2" height="2" fill="#2a62a8"/><rect x="13.6" y="13.6" width="2" height="2" fill="#2a62a8"/><rect x="0.19999999999999996" y="13.6" width="2" height="2" fill="#2a62a8"/></svg>
<svg class="i" style="left:447.6px;top:976.4px" width="16" height="16" viewBox="0 0 16 16"><rect x="1.2" y="2" width="13.4" height="11.4" fill="url(#gFill)" stroke="#128212" stroke-width="1.1"/><rect x="0.19999999999999996" y="1.0" width="2" height="2" fill="#2a62a8"/><rect x="13.6" y="12.4" width="2" height="2" fill="#2a62a8"/></svg>
<svg class="i" style="left:481.4px;top:976.4px" width="16" height="16" viewBox="0 0 16 16"><circle cx="7.6" cy="7.6" r="6.8" fill="#e4ecf8" stroke="#4a6aa8" stroke-width="1"/><circle cx="7.6" cy="7.6" r="1.8" fill="#3a5a98"/></svg>
<svg class="i" style="left:505.6px;top:976.4px" width="16" height="16" viewBox="0 0 16 16"><path d="M1.2 1.2H7.4L14.6 8V14.6H1.2Z" fill="url(#gFill)" stroke="#4a74b0" stroke-width="1.1"/><rect x="0.19999999999999996" y="0.19999999999999996" width="2" height="2" fill="#2a62a8"/><rect x="6.4" y="0.19999999999999996" width="2" height="2" fill="#2a62a8"/><rect x="13.6" y="7.0" width="2" height="2" fill="#2a62a8"/><rect x="13.6" y="13.6" width="2" height="2" fill="#2a62a8"/><rect x="0.19999999999999996" y="13.6" width="2" height="2" fill="#2a62a8"/></svg>
<svg class="i" style="left:530.6px;top:976.4px" width="16" height="16" viewBox="0 0 16 16"><rect x="1.2" y="2" width="13.4" height="11.4" fill="url(#gFill)" stroke="#4a74b0" stroke-width="1.1"/><rect x="0.19999999999999996" y="1.0" width="2" height="2" fill="#2a62a8"/><rect x="13.6" y="12.4" width="2" height="2" fill="#2a62a8"/></svg>
<svg class="i" style="left:556px;top:977px" width="16" height="14" viewBox="0 0 16 14"><rect x="1" y="1" width="13" height="11" fill="#fff" stroke="#000" stroke-width="1"/><text x="7.6" y="10.4" font-family="Liberation Serif,serif" font-size="11.5" fill="#1a1a8a" text-anchor="middle">A</text><rect x="-0.3999999999999999" y="-0.3999999999999999" width="2.8" height="2.8" fill="#2a62a8"/><rect x="12.6" y="10.6" width="2.8" height="2.8" fill="#2a62a8"/></svg>
<svg class="i" style="left:594px;top:949px" width="16" height="11" viewBox="0 0 16 11"><rect x=".6" y="3" width="10" height="7.4" fill="#fff" stroke="#222" stroke-width="1"/><path d="M5 9.4L5.8 6.8L12 .8L14 2.6L7.8 8.8Z" fill="#f0c850" stroke="#8a6a18" stroke-width=".6"/><path d="M12 .8L13 0L14.8 1.6L14 2.6Z" fill="#e05040"/><path d="M5 9.4L5.6 7.6L7 8.8Z" fill="#333"/></svg>
<span class="t" style="left:612.70px;top:950.00px;font-size:11px;color:#47505f;font-weight:bold;letter-spacing:-0.137px;">Line</span>
<div style="position:absolute;left:594px;top:964.3px;width:45.6px;height:14.3px;box-sizing:border-box;border:1px solid #d9dbe0;border-radius:3px;background:linear-gradient(#e9e9ea 0%,#dedede 45%,#d1d1d2 55%,#d8d8d9 100%);"></div><svg class="i" style="left:629.2px;top:970.9px" width="5.6" height="3.2" viewBox="0 0 5.6 3.2"><path d="M0 0H5.6L2.8 3.2Z" fill="#4a4a4a"/></svg><svg class="i" style="left:596.6px;top:966.0999999999999px" width="12" height="11" viewBox="0 0 12 11"><path d="M0 1H8" stroke="#8a8a8a" stroke-width="1"/><path d="M0 4H8" stroke="#8a8a8a" stroke-width="2"/><path d="M0 8.4H8" stroke="#808080" stroke-width="3.4"/></svg>
<div style="position:absolute;left:644px;top:964.3px;width:45.6px;height:14.3px;box-sizing:border-box;border:1px solid #d9dbe0;border-radius:3px;background:linear-gradient(#e9e9ea 0%,#dedede 45%,#d1d1d2 55%,#d8d8d9 100%);"></div><svg class="i" style="left:679.2px;top:970.9px" width="5.6" height="3.2" viewBox="0 0 5.6 3.2"><path d="M0 0H5.6L2.8 3.2Z" fill="#4a4a4a"/></svg><svg class="i" style="left:646.6px;top:966.0999999999999px" width="12" height="11" viewBox="0 0 12 11"><path d="M0 1.4H8" stroke="#8a8a8a" stroke-width="1"/><path d="M0 5H8" stroke="#8a8a8a" stroke-width="1" stroke-dasharray="1.4 1"/><path d="M0 8.6H8" stroke="#8a8a8a" stroke-width="1" stroke-dasharray="3 1.4"/></svg>
<div style="position:absolute;left:694px;top:964.3px;width:45.6px;height:14.3px;box-sizing:border-box;border:1px solid #d9dbe0;border-radius:3px;background:linear-gradient(#e9e9ea 0%,#dedede 45%,#d1d1d2 55%,#d8d8d9 100%);"></div><svg class="i" style="left:729.2px;top:970.9px" width="5.6" height="3.2" viewBox="0 0 5.6 3.2"><path d="M0 0H5.6L2.8 3.2Z" fill="#4a4a4a"/></svg><svg class="i" style="left:696.6px;top:966.0999999999999px" width="12" height="11" viewBox="0 0 12 11"><circle cx="5.4" cy="5.4" r="5.4" fill="#9c9c9c"/><path d="M5.4 5.4L9.4 1.8A5.4 5.4 0 0 1 9.8 8.6Z" fill="#b8b8b8"/><path d="M5.4 5.4L1 2.2A5.4 5.4 0 0 1 6.6 .1Z" fill="#c4c4c4"/></svg>
<div style="position:absolute;left:594px;top:980.3px;width:45.6px;height:14.3px;box-sizing:border-box;border:1px solid #d9dbe0;border-radius:3px;background:linear-gradient(#e9e9ea 0%,#dedede 45%,#d1d1d2 55%,#d8d8d9 100%);"></div><svg class="i" style="left:629.2px;top:986.9px" width="5.6" height="3.2" viewBox="0 0 5.6 3.2"><path d="M0 0H5.6L2.8 3.2Z" fill="#4a4a4a"/></svg><svg class="i" style="left:596.6px;top:982.0999999999999px" width="12" height="11" viewBox="0 0 12 11"><circle cx="2.6" cy="5.4" r="2.4" fill="#9a9a9a"/><path d="M3 5.4H10" stroke="#9a9a9a" stroke-width="1"/></svg>
<div style="position:absolute;left:644px;top:980.3px;width:45.6px;height:14.3px;box-sizing:border-box;border:1px solid #d9dbe0;border-radius:3px;background:linear-gradient(#e9e9ea 0%,#dedede 45%,#d1d1d2 55%,#d8d8d9 100%);"></div><svg class="i" style="left:679.2px;top:986.9px" width="5.6" height="3.2" viewBox="0 0 5.6 3.2"><path d="M0 0H5.6L2.8 3.2Z" fill="#4a4a4a"/></svg><svg class="i" style="left:646.6px;top:982.0999999999999px" width="12" height="11" viewBox="0 0 12 11"><circle cx="7" cy="5.4" r="2.4" fill="#9a9a9a"/><path d="M0 5.4H8" stroke="#9a9a9a" stroke-width="1"/></svg>
<svg class="i" style="left:754px;top:948px" width="16" height="14" viewBox="0 0 16 14"><path d="M1 8L6.4 2.6L12 8.4L7 13.4Z" fill="#fff" stroke="#2a5aa8" stroke-width="1.1" stroke-linejoin="round"/><path d="M5 1.4C5 -.2 8 -.2 8 2V6" fill="none" stroke="#2a5aa8" stroke-width="1.1"/><path d="M9.6 5C12.6 5 14.8 7.4 14.4 11.6C13.4 9.4 12.6 8.6 10.6 8.4Z" fill="#3a78e0"/></svg>
<span class="t" style="left:772.40px;top:949.00px;font-size:11px;color:#47505f;font-weight:bold;letter-spacing:-0.229px;">Fill</span>
<div style="position:absolute;left:752.4px;top:964.3px;width:45.3px;height:14.3px;box-sizing:border-box;border:1px solid #d9dbe0;border-radius:3px;background:linear-gradient(#e9e9ea 0%,#dedede 45%,#d1d1d2 55%,#d8d8d9 100%);"></div><svg class="i" style="left:787.3px;top:970.9px" width="5.6" height="3.2" viewBox="0 0 5.6 3.2"><path d="M0 0H5.6L2.8 3.2Z" fill="#4a4a4a"/></svg><svg class="i" style="left:755.0px;top:966.0999999999999px" width="12" height="11" viewBox="0 0 12 11"><circle cx="5.4" cy="5.4" r="5.4" fill="#9c9c9c"/><path d="M5.4 5.4L9.4 1.8A5.4 5.4 0 0 1 9.8 8.6Z" fill="#b8b8b8"/><path d="M5.4 5.4L1 2.2A5.4 5.4 0 0 1 6.6 .1Z" fill="#c4c4c4"/></svg>
<svg class="i" style="left:810.4px;top:947px" width="17" height="15" viewBox="0 0 17 15"><text x="0" y="14" font-family="Liberation Serif,serif" font-weight="bold" font-size="17" fill="#d86070">A</text><text x="9.8" y="9.6" font-family="Liberation Sans,sans-serif" font-size="11.5" fill="#6a5ad0" stroke="#6a5ad0" stroke-width=".3">a</text></svg>
<span class="t" style="left:828.80px;top:949.00px;font-size:11px;color:#47505f;font-weight:bold;">Text</span>
<div style="position:absolute;left:810.3px;top:963.6px;width:45.5px;height:14.3px;box-sizing:border-box;border:1px solid #d9dbe0;border-radius:3px;background:linear-gradient(#e9e9ea 0%,#dedede 45%,#d1d1d2 55%,#d8d8d9 100%);"></div><svg class="i" style="left:845.4px;top:970.2px" width="5.6" height="3.2" viewBox="0 0 5.6 3.2"><path d="M0 0H5.6L2.8 3.2Z" fill="#4a4a4a"/></svg><svg class="i" style="left:812.9px;top:965.4px" width="12" height="11" viewBox="0 0 12 11"><circle cx="5.4" cy="5.4" r="5.4" fill="#9c9c9c"/><path d="M5.4 5.4L9.4 1.8A5.4 5.4 0 0 1 9.8 8.6Z" fill="#b8b8b8"/><path d="M5.4 5.4L1 2.2A5.4 5.4 0 0 1 6.6 .1Z" fill="#c4c4c4"/></svg>
<div style="position:absolute;left:810.3px;top:979.6px;width:45.5px;height:14.3px;box-sizing:border-box;border:1px solid #d9dbe0;border-radius:3px;background:linear-gradient(#e9e9ea 0%,#dedede 45%,#d1d1d2 55%,#d8d8d9 100%);"></div><svg class="i" style="left:845.4px;top:986.2px" width="5.6" height="3.2" viewBox="0 0 5.6 3.2"><path d="M0 0H5.6L2.8 3.2Z" fill="#4a4a4a"/></svg><svg class="i" style="left:812.9px;top:981.4px" width="12" height="11" viewBox="0 0 12 11"><text x="0" y="9.6" font-family="Liberation Serif,serif" font-size="11" fill="#8a8a8a">A</text><path d="M7.4 4L9 1.6L10.6 4ZM7.4 6.6L9 9L10.6 6.6Z" fill="#9a9a9a"/></svg>
<svg class="i" style="left:849px;top:1001.4px" width="7" height="7" viewBox="0 0 7 7"><path d="M.5 5.6V.5H5.6" fill="none" stroke="#6a6a6a" stroke-width="1"/><path d="M2.6 2.6L6.4 6.4M6.8 3.4V6.8H3.4" fill="none" stroke="#5a5a5a" stroke-width="1.2"/></svg>
<div style="position:absolute;left:887px;top:945.6px;width:48.6px;height:19px;box-sizing:border-box;border:1px solid #dfe2e8;border-top-color:#c9ccd3;border-radius:2px;background:#fff;"></div>
<div style="position:absolute;left:887px;top:968.6px;width:48.6px;height:18.8px;box-sizing:border-box;border:1px solid #dfe2e8;border-top-color:#c9ccd3;border-radius:2px;background:#fff;"></div>
<div style="position:absolute;left:864.3px;top:944.6px;width:23.4px;height:20.8px;box-sizing:border-box;border:1px solid #c4c7ce;border-radius:2.5px;background:linear-gradient(#fdfdfd 0%,#f4f4f5 48%,#e4e5e8 52%,#eeeff1 100%);"></div>
<div style="position:absolute;left:864.3px;top:967.5px;width:23.4px;height:20.8px;box-sizing:border-box;border:1px solid #c4c7ce;border-radius:2.5px;background:linear-gradient(#fdfdfd 0%,#f4f4f5 48%,#e4e5e8 52%,#eeeff1 100%);"></div>
<svg class="i" style="left:868px;top:947.4px" width="7" height="14" viewBox="0 0 7 14"><path d="M3 1V13M.2 1H5.8M.2 13H5.8" stroke="#1c4a84" stroke-width="1.2" fill="none"/><path d="M3 1.4L1.2 4.2H4.8ZM3 12.6L1.2 9.8H4.8Z" fill="#1c4a84"/></svg>
<svg class="i" style="left:876px;top:946.2px" width="10" height="11.4" viewBox="0 0 10 11.4"><g transform="scale(.8) translate(1.2 1.4)"><path d="M2.4 5V3.4A2.6 2.6 0 0 1 7.6 3.4V5" fill="none" stroke="#b0a070" stroke-width="1.3"/><rect x=".8" y="4.6" width="8.4" height="6.2" rx="1" fill="#f0b830" stroke="#c08a18" stroke-width=".7"/><path d="M3 7.4H7" stroke="#fff0b0" stroke-width="1"/></g></svg>
<svg class="i" style="left:867.6px;top:973px" width="14" height="14" viewBox="0 0 14 14"><path d="M.6 12.6H13M1 12.4L8.4 1.6M3.4 12.4C3.4 9 5.6 6.8 8.6 7C10 8.6 10.8 10.6 10.8 12.4" fill="none" stroke="#1c4a84" stroke-width="1.2"/><circle cx="6" cy="10" r="1.2" fill="none" stroke="#1c4a84" stroke-width=".8"/></svg>
<svg class="i" style="left:876px;top:969.6px" width="10" height="11.4" viewBox="0 0 10 11.4"><g transform="scale(.8) translate(1.2 1.4)"><path d="M2.4 5V3.4A2.6 2.6 0 0 1 7.6 3.4V5" fill="none" stroke="#b0a070" stroke-width="1.3"/><rect x=".8" y="4.6" width="8.4" height="6.2" rx="1" fill="#f0b830" stroke="#c08a18" stroke-width=".7"/><path d="M3 7.4H7" stroke="#fff0b0" stroke-width="1"/></g></svg>
<span class="t" style="left:926.53px;top:949.00px;font-size:12px;color:#0a0a14;font-weight:bold;">0</span>
<span class="t" style="left:926.53px;top:972.00px;font-size:12px;color:#0a0a14;font-weight:bold;">0</span>
<svg class="i" style="left:868px;top:992px" width="15" height="15" viewBox="0 0 15 15"><rect x="1" y="1.4" width="13.4" height="13" fill="#fff" stroke="#1c4a84" stroke-width="1.1"/><rect x="-.4" y="0" width="3" height="3" fill="#3a7ad0"/><path d="M3 5H5M6 5H12.6M3 8H5M6 8H12.6M3 11H5M6 11H12.6" stroke="#12388a" stroke-width="1.5"/></svg>
<div style="position:absolute;left:888.4px;top:990.6px;width:47px;height:19px;box-sizing:border-box;border:1px solid #b9b9b9;border-radius:2.5px;background:#ededed;box-shadow:0 0 0 1px rgba(255,255,255,.7);"></div>
<svg class="i" style="left:944.4px;top:958.6px" width="17" height="17" viewBox="0 0 17 17"><path d="M.6 2.4H6.6M.6 4.6H6.6M2 .8V6.4M4.6 .8V6.4" stroke="#e8b820" stroke-width="1.1"/><path d="M1.4 16L2.4 12.4L11.6 3.4L14.6 6L5.4 15Z" fill="#f8d840" stroke="#a07818" stroke-width=".7"/><path d="M11.6 3.4L13.2 2A2 2 0 0 1 16 4.4L14.6 6Z" fill="#e82828"/><path d="M10.8 4.2L13.8 6.8" stroke="#d8d8d8" stroke-width="1"/><path d="M1.4 16L2.2 13.2L4.6 15.2Z" fill="#c87020"/></svg>
<svg class="i" style="left:972.6px;top:951.4px" width="15" height="11" viewBox="0 0 15 11"><path d="M.8 .6V10.4M1 5.5H10" stroke="#1c4a84" stroke-width="1.3" fill="none"/><path d="M14.4 5.5L9.6 2.2V8.8Z" fill="#1c4a84"/></svg>
<svg class="i" style="left:975.6px;top:974.6px" width="9" height="15" viewBox="0 0 9 15"><path d="M.4 13.6H8.4M4.4 13.4V4" stroke="#1c4a84" stroke-width="1.3" fill="none"/><path d="M4.4 0L1.2 4.8H7.6Z" fill="#1c4a84"/></svg>
<div style="position:absolute;left:991.3px;top:947.4px;width:51.4px;height:19.2px;box-sizing:border-box;border:1px solid #b9b9b9;border-radius:2.5px;background:#ededed;box-shadow:0 0 0 1px rgba(255,255,255,.7);"></div>
<div style="position:absolute;left:991.3px;top:972.4px;width:51.4px;height:19.2px;box-sizing:border-box;border:1px solid #b9b9b9;border-radius:2.5px;background:#ededed;box-shadow:0 0 0 1px rgba(255,255,255,.7);"></div>
<svg class="i" style="left:1048.6px;top:951.4px" width="17" height="11" viewBox="0 0 17 11"><path d="M.8 .6V10.4M15.6 .6V10.4M3 5.5H13.4" stroke="#1c4a84" stroke-width="1.3" fill="none"/><path d="M1.6 5.5L5.6 2.6V8.4ZM14.8 5.5L10.8 2.6V8.4Z" fill="#1c4a84"/></svg>
<svg class="i" style="left:1052.6px;top:974.2px" width="9" height="16" viewBox="0 0 9 16"><path d="M.4 .7H8.4M.4 15.3H8.4M4.4 3V13" stroke="#1c4a84" stroke-width="1.3" fill="none"/><path d="M4.4 1.4L1.4 5.4H7.4ZM4.4 14.6L1.4 10.6H7.4Z" fill="#1c4a84"/></svg>
<div style="position:absolute;left:1068.2px;top:947.4px;width:51.4px;height:19.2px;box-sizing:border-box;border:1px solid #b9b9b9;border-radius:2.5px;background:#ededed;box-shadow:0 0 0 1px rgba(255,255,255,.7);"></div>
<div style="position:absolute;left:1068.2px;top:972.4px;width:51.4px;height:19.2px;box-sizing:border-box;border:1px solid #b9b9b9;border-radius:2.5px;background:#ededed;box-shadow:0 0 0 1px rgba(255,255,255,.7);"></div>
<svg class="i" style="left:1119px;top:954px" width="16" height="32" viewBox="1119 954 16 32"><path d="M1119.6 957H1131.6V983.2H1119.6" fill="none" stroke="#a4a4a4" stroke-width="2.6"/></svg>
<div style="position:absolute;left:1124.2px;top:963.3px;width:13.8px;height:14.5px;box-sizing:border-box;border:1px solid #d4d8de;border-radius:3px;background:#f6f7f9;"></div>
<svg class="i" style="left:1126.4px;top:965.2px" width="10" height="11.4" viewBox="0 0 10 11.4"><g transform="scale(.8) translate(1.2 1.4)"><path d="M2.4 5V3.4A2.6 2.6 0 0 1 7.6 3.4V5" fill="none" stroke="#b0a070" stroke-width="1.3"/><rect x=".8" y="4.6" width="8.4" height="6.2" rx="1" fill="#f0b830" stroke="#c08a18" stroke-width=".7"/><path d="M3 7.4H7" stroke="#fff0b0" stroke-width="1"/></g></svg>
<svg class="i" style="left:1143px;top:946px" width="48" height="48" viewBox="1143 946 48 48" font-family="Liberation Sans,sans-serif"><defs><linearGradient id="gDial" x1="0" y1="0" x2="0" y2="1"><stop offset="0" stop-color="#f4f5f6"/><stop offset="1" stop-color="#e2e3e5"/></linearGradient></defs><path d="M1144.3 975.6V969A22.1 21.3 0 0 1 1188.5 969V975.6Z" fill="url(#gDial)" stroke="#b8b8ba" stroke-width="1"/><rect x="1144.3" y="975.6" width="44.2" height="16.8" fill="#fff" stroke="#b4b4b6" stroke-width="1"/><path d="M1166.3 955V970.6" stroke="#a8a8aa" stroke-width="1"/><path d="M1144.6 970.3H1148M1184.6 970.3H1188.2M1150.8 954.6L1153 957M1181.6 954.6L1179.6 957" stroke="#7a7a7a" stroke-width="1"/><circle cx="1166.2" cy="952.6" r="3.9" fill="#a9aab2" stroke="#8c8e98" stroke-width=".8"/><circle cx="1165.4" cy="951.6" r="1.6" fill="#c8c9d0"/><text x="1166.4" y="987.6" font-size="12" font-weight="bold" text-anchor="middle" fill="#0a0a0a">0.0</text></svg>
<div style="position:absolute;left:1194.3px;top:959.3px;width:33.5px;height:33.2px;box-sizing:border-box;border:1px solid #c2c3c6;border-radius:2px;background:linear-gradient(#ececed 0%,#e8e8ea 33%,#d9dbde 50%,#e2e3e5 66%,#eaeaeb 100%);"></div>
<div style="position:absolute;left:1205.3999999999999px;top:960px;width:1px;height:32px;background:#c6c7ca;box-shadow:1px 0 0 #f0f0f1;"></div>
<div style="position:absolute;left:1195px;top:970.3px;width:32px;height:1px;background:#c6c7ca;box-shadow:0 1px 0 #efeff0;"></div>
<div style="position:absolute;left:1216.5px;top:960px;width:1px;height:32px;background:#c6c7ca;box-shadow:1px 0 0 #f0f0f1;"></div>
<div style="position:absolute;left:1195px;top:981.3px;width:32px;height:1px;background:#c6c7ca;box-shadow:0 1px 0 #efeff0;"></div>
<!-- status -->
<div style="position:absolute;left:0px;top:1014px;width:1920px;height:26px;background:linear-gradient(#e1e4e7 0%,#d6d9dc 35%,#c3c6c9 70%,#b3b6ba 100%);"></div>
<div style="position:absolute;left:0px;top:1014px;width:1920px;height:1px;background:#f0f1f3;"></div>
<span class="t" style="left:6.20px;top:1022.00px;font-size:12px;color:#141414;font-weight:bold;letter-spacing:0.245px;">Click and hold the mouse button then move the cursor in any direction to pan. Release the button to end.</span>
<svg class="i" style="left:1740px;top:1019px" width="16.4" height="16.4" viewBox="0 0 16.4 16.4"><path d="M2.4 2.6V14.2H14" fill="none" stroke="#2a5a9c" stroke-width="1.3"/><path d="M2.4 0L.4 3.4H4.4ZM16 14.2L12.6 12.2V16.2Z" fill="#2a5a9c"/><path d="M12 .4V6.4M9 3.4H15" stroke="#1a3a70" stroke-width="1"/><path d="M12 0L10.8 1.6H13.2ZM12 6.8L10.8 5.2H13.2ZM8.6 3.4L10.2 2.2V4.6ZM15.4 3.4L13.8 2.2V4.6Z" fill="#1a3a70"/></svg>
<span class="t" style="left:1769.00px;top:1022.00px;font-size:12px;color:#141414;letter-spacing:0.459px;">-121.00 , 113.00</span>
<div style="position:absolute;left:1880.2px;top:1021.2px;width:26px;height:11.6px;background:#a3a3ff;border-radius:5px;box-shadow:0 0 0 .6px #b9b9ff;"></div>
<span class="t" style="left:1883.20px;top:1021.60px;font-size:12px;color:#fff;font-weight:bold;letter-spacing:-0.940px;">mm</span>
</body></html>
